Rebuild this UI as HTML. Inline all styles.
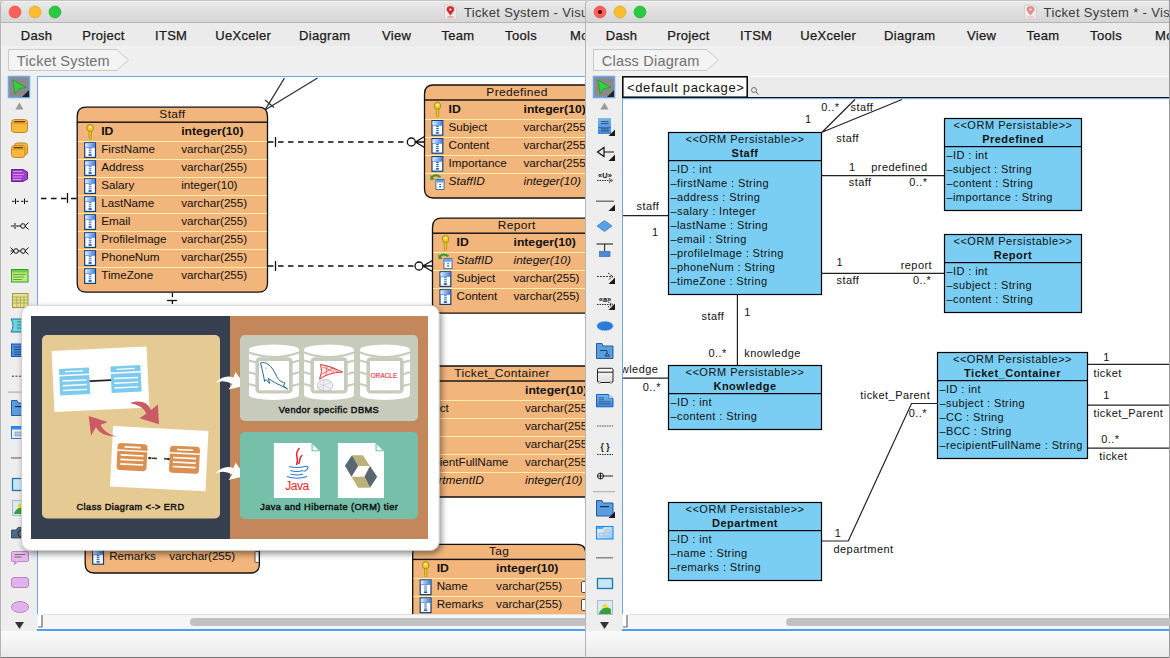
<!DOCTYPE html><html><head><meta charset="utf-8"><style>html,body{margin:0;padding:0;width:1170px;height:658px;overflow:hidden;background:#fff}svg{display:block}text{font-family:"Liberation Sans", sans-serif}</style></head><body>
<svg width="1170" height="658" viewBox="0 0 1170 658">
<defs>
<linearGradient id="gTitle" x1="0" y1="0" x2="0" y2="1"><stop offset="0" stop-color="#ebebeb"/><stop offset="1" stop-color="#d6d6d6"/></linearGradient>
<linearGradient id="gStatus" x1="0" y1="0" x2="0" y2="1"><stop offset="0" stop-color="#fbfbfb"/><stop offset="1" stop-color="#ebebeb"/></linearGradient>
<linearGradient id="gColTop" x1="0" y1="0" x2="1" y2="0"><stop offset="0" stop-color="#e0efff"/><stop offset="1" stop-color="#3a7ee0"/></linearGradient>
<linearGradient id="gBlueV" x1="0" y1="0" x2="0" y2="1"><stop offset="0" stop-color="#7ab8f0"/><stop offset="1" stop-color="#3a86d8"/></linearGradient>
<linearGradient id="gGrayV" x1="0" y1="0" x2="0" y2="1"><stop offset="0" stop-color="#ffffff"/><stop offset="1" stop-color="#dcdcdc"/></linearGradient>
<linearGradient id="gLightBlue" x1="0" y1="0" x2="1" y2="1"><stop offset="0" stop-color="#f4f8fc"/><stop offset="1" stop-color="#8ac4f0"/></linearGradient>
<clipPath id="clipL"><rect x="37" y="77" width="548" height="537"/></clipPath>
<clipPath id="clipR"><rect x="623" y="98" width="546" height="516"/></clipPath>
<filter id="shadow" x="-10%" y="-10%" width="130%" height="130%"><feGaussianBlur in="SourceAlpha" stdDeviation="3"/><feOffset dx="2" dy="3"/><feComponentTransfer><feFuncA type="linear" slope="0.45"/></feComponentTransfer><feMerge><feMergeNode/><feMergeNode in="SourceGraphic"/></feMerge></filter>
</defs>
<rect x="0" y="0" width="585" height="658" fill="#ececec"/>
<rect x="0" y="0" width="585" height="22" fill="url(#gTitle)"/>
<rect x="0" y="22" width="585" height="1" fill="#b5b5b5"/>
<circle cx="15" cy="12" r="6" fill="#fc5f57" stroke="#de4a43" stroke-width="0.6"/>
<circle cx="35" cy="12" r="6" fill="#fdbb2e" stroke="#dd9f21" stroke-width="0.6"/>
<circle cx="55" cy="12" r="6" fill="#29c940" stroke="#1daa2f" stroke-width="0.6"/>
<path d="M444.4 5 H453.4 L456.4 8 V19 H444.4 Z" fill="#eeeae6" stroke="#c9c2ba" stroke-width="0.6"/>
<path d="M450.4 15.5 L446.7 10.5 Q445.9 6.3 450.4 6 Q454.9 6.3 454.09999999999997 10.5 Z" fill="#d42a35"/>
<circle cx="450.4" cy="9.5" r="1.1" fill="#fff"/>
<rect x="447.4" y="16.5" width="6" height="1" fill="#d42a35" opacity="0.6"/>
<text x="463.9" y="16.7" font-size="13" fill="#3a3a3a" font-weight="normal" font-style="normal" text-anchor="start" letter-spacing="0.35" >Ticket System - Visual Paradigm</text>
<rect x="0" y="23" width="585" height="23" fill="#ebebeb"/>
<text x="20.7" y="39.7" font-size="13" fill="#1a1a1a" font-weight="normal" font-style="normal" text-anchor="start" letter-spacing="0.3" stroke="#1a1a1a" stroke-width="0.25">Dash</text>
<text x="82.2" y="39.7" font-size="13" fill="#1a1a1a" font-weight="normal" font-style="normal" text-anchor="start" letter-spacing="0.3" stroke="#1a1a1a" stroke-width="0.25">Project</text>
<text x="155" y="39.7" font-size="13" fill="#1a1a1a" font-weight="normal" font-style="normal" text-anchor="start" letter-spacing="0.3" stroke="#1a1a1a" stroke-width="0.25">ITSM</text>
<text x="215.2" y="39.7" font-size="13" fill="#1a1a1a" font-weight="normal" font-style="normal" text-anchor="start" letter-spacing="0.3" stroke="#1a1a1a" stroke-width="0.25">UeXceler</text>
<text x="299.1" y="39.7" font-size="13" fill="#1a1a1a" font-weight="normal" font-style="normal" text-anchor="start" letter-spacing="0.3" stroke="#1a1a1a" stroke-width="0.25">Diagram</text>
<text x="382" y="39.7" font-size="13" fill="#1a1a1a" font-weight="normal" font-style="normal" text-anchor="start" letter-spacing="0.3" stroke="#1a1a1a" stroke-width="0.25">View</text>
<text x="441.4" y="39.7" font-size="13" fill="#1a1a1a" font-weight="normal" font-style="normal" text-anchor="start" letter-spacing="0.3" stroke="#1a1a1a" stroke-width="0.25">Team</text>
<text x="505.1" y="39.7" font-size="13" fill="#1a1a1a" font-weight="normal" font-style="normal" text-anchor="start" letter-spacing="0.3" stroke="#1a1a1a" stroke-width="0.25">Tools</text>
<text x="570" y="39.7" font-size="13" fill="#1a1a1a" font-weight="normal" font-style="normal" text-anchor="start" letter-spacing="0.3" stroke="#1a1a1a" stroke-width="0.25">Modeling</text>
<rect x="0" y="46" width="585" height="30" fill="#f0f0f0"/>
<path d="M8.5 49.5 L116.5 49.5 L128.5 60 L116.5 70.5 L8.5 70.5 Z" fill="#f4f4f4" stroke="#c9c9c9" stroke-width="1"/>
<text x="16.8" y="65.9" font-size="14.5" fill="#707070" font-weight="normal" font-style="normal" text-anchor="start" letter-spacing="0.2" >Ticket System</text>
<rect x="0" y="76" width="37" height="555" fill="#eeeeee"/>
<rect x="37" y="76" width="548" height="538" fill="#ffffff"/>
<rect x="37" y="614" width="548" height="15" fill="#f6f6f6"/>
<rect x="37" y="614" width="548" height="1" fill="#e2e2e2"/>
<rect x="37" y="629" width="548" height="2" fill="#4c9ff2"/>
<rect x="0" y="631" width="585" height="26" fill="url(#gStatus)"/>
<rect x="0" y="656" width="585" height="1" fill="#e8e8e8"/>
<rect x="0" y="657" width="585" height="1" fill="#7a7a7a"/>
<rect x="0" y="0" width="1" height="658" fill="#b4b4b4"/>
<rect x="0" y="0" width="585" height="1" fill="#c4c4c4"/>
<rect x="0" y="1" width="585" height="1" fill="#f2f2f2"/>
<path d="M0 0 H6 Q1 1 0.5 6 V0 Z" fill="#c8c8c8"/>
<rect x="37" y="76" width="548" height="1" fill="#68a8ec"/>
<rect x="37" y="76" width="1" height="538" fill="#68a8ec"/>
<g clip-path="url(#clipL)">
<g stroke="#333" stroke-width="1.4" fill="none">
<path d="M265 110 L284.5 78"/><path d="M265 110 L317.5 78"/>
<path d="M265 100 L274 107.5" stroke-width="1.2"/>
</g>
<g stroke="#111" stroke-width="1.3" fill="none">
<path d="M268 142 L407 142" stroke-dasharray="5.5 4.5"/>
<path d="M275.5 137 L275.5 147"/>
<circle cx="411.3" cy="142" r="4"/>
<path d="M424.5 136.5 L415.5 142 L424.5 147.5 M415.5 142 L424.5 142"/>
<path d="M268 266 L415 266" stroke-dasharray="5.5 4.5"/>
<path d="M275.5 261 L275.5 271"/>
<circle cx="419" cy="266" r="4"/>
<path d="M432.5 260.5 L423 266 L432.5 271.5 M423 266 L432.5 266"/>
<path d="M41 198.5 L77 198.5" stroke-dasharray="5.5 4.5"/>
<path d="M67.5 193 L67.5 203"/>
<path d="M172.4 293 L172.4 306" stroke-dasharray="4 3"/>
<path d="M167 300.5 L177 300.5"/>
</g>
<path d="M77.2 116.2 Q77.2 107.2 86.2 107.2 L258.5 107.2 Q267.5 107.2 267.5 116.2 L267.5 283.2 Q267.5 292.2 258.5 292.2 L86.2 292.2 Q77.2 292.2 77.2 283.2 Z" fill="#f2b57b" stroke="#111" stroke-width="1.3"/>
<rect x="77.2" y="121.5" width="190.3" height="1.4" fill="#111"/>
<text transform="translate(172.35000000000002 118.2) scale(1.13 1)" x="0" y="0" font-size="10.6" fill="#111" font-weight="normal" font-style="normal" text-anchor="middle" letter-spacing="0.3" >Staff</text>
<g><ellipse cx="90.2" cy="128.0" rx="3.3" ry="3.6" fill="#f0cc20" stroke="#9a8010" stroke-width="0.8"/><ellipse cx="90.2" cy="127.10000000000001" rx="1.3" ry="0.9" fill="#fffbe0"/><path d="M89.0 131.2 L91.4 131.2 L91.4 138.2 L90.2 139.7 L89.0 138.2 Z" fill="#ecc81c" stroke="#9a8010" stroke-width="0.6"/></g>
<text transform="translate(101.2 135.2) scale(1.15 1)" x="0" y="0" font-size="10.6" fill="#111" font-weight="bold" font-style="normal" text-anchor="start" letter-spacing="0" >ID</text>
<text transform="translate(181.2 135.2) scale(1.15 1)" x="0" y="0" font-size="10.6" fill="#111" font-weight="bold" font-style="normal" text-anchor="start" letter-spacing="0" >integer(10)</text>
<rect x="77.9" y="141" width="188.9" height="1" fill="#fdf0a6"/>
<g><rect x="84.7" y="142.79999999999998" width="10.8" height="14.6" fill="#fff" stroke="#0f3f80" stroke-width="1.2"/><rect x="85.30000000000001" y="143.39999999999998" width="9.6" height="3.8" fill="url(#gColTop)"/><rect x="85.30000000000001" y="147.2" width="9.6" height="0.6" fill="#2a6ac8"/><ellipse cx="90.10000000000001" cy="148.79999999999998" rx="1.7" ry="0.55" fill="#1d5fb0"/><ellipse cx="90.10000000000001" cy="150.79999999999998" rx="1.7" ry="0.55" fill="#1d5fb0"/><ellipse cx="90.10000000000001" cy="152.79999999999998" rx="1.7" ry="0.55" fill="#1d5fb0"/><ellipse cx="90.10000000000001" cy="155.0" rx="1.9" ry="0.9" fill="#1d5fb0"/></g>
<text transform="translate(101.2 153.2) scale(1.1 1)" x="0" y="0" font-size="10.6" fill="#111" font-weight="normal" font-style="normal" text-anchor="start" letter-spacing="0" >FirstName</text>
<text transform="translate(181.2 153.2) scale(1.1 1)" x="0" y="0" font-size="10.6" fill="#111" font-weight="normal" font-style="normal" text-anchor="start" letter-spacing="0" >varchar(255)</text>
<rect x="77.9" y="159" width="188.9" height="1" fill="#fdf0a6"/>
<g><rect x="84.7" y="160.79999999999998" width="10.8" height="14.6" fill="#fff" stroke="#0f3f80" stroke-width="1.2"/><rect x="85.30000000000001" y="161.39999999999998" width="9.6" height="3.8" fill="url(#gColTop)"/><rect x="85.30000000000001" y="165.2" width="9.6" height="0.6" fill="#2a6ac8"/><ellipse cx="90.10000000000001" cy="166.79999999999998" rx="1.7" ry="0.55" fill="#1d5fb0"/><ellipse cx="90.10000000000001" cy="168.79999999999998" rx="1.7" ry="0.55" fill="#1d5fb0"/><ellipse cx="90.10000000000001" cy="170.79999999999998" rx="1.7" ry="0.55" fill="#1d5fb0"/><ellipse cx="90.10000000000001" cy="173.0" rx="1.9" ry="0.9" fill="#1d5fb0"/></g>
<text transform="translate(101.2 171.2) scale(1.1 1)" x="0" y="0" font-size="10.6" fill="#111" font-weight="normal" font-style="normal" text-anchor="start" letter-spacing="0" >Address</text>
<text transform="translate(181.2 171.2) scale(1.1 1)" x="0" y="0" font-size="10.6" fill="#111" font-weight="normal" font-style="normal" text-anchor="start" letter-spacing="0" >varchar(255)</text>
<rect x="77.9" y="177" width="188.9" height="1" fill="#fdf0a6"/>
<g><rect x="84.7" y="178.79999999999998" width="10.8" height="14.6" fill="#fff" stroke="#0f3f80" stroke-width="1.2"/><rect x="85.30000000000001" y="179.39999999999998" width="9.6" height="3.8" fill="url(#gColTop)"/><rect x="85.30000000000001" y="183.2" width="9.6" height="0.6" fill="#2a6ac8"/><ellipse cx="90.10000000000001" cy="184.79999999999998" rx="1.7" ry="0.55" fill="#1d5fb0"/><ellipse cx="90.10000000000001" cy="186.79999999999998" rx="1.7" ry="0.55" fill="#1d5fb0"/><ellipse cx="90.10000000000001" cy="188.79999999999998" rx="1.7" ry="0.55" fill="#1d5fb0"/><ellipse cx="90.10000000000001" cy="191.0" rx="1.9" ry="0.9" fill="#1d5fb0"/></g>
<text transform="translate(101.2 189.2) scale(1.1 1)" x="0" y="0" font-size="10.6" fill="#111" font-weight="normal" font-style="normal" text-anchor="start" letter-spacing="0" >Salary</text>
<text transform="translate(181.2 189.2) scale(1.1 1)" x="0" y="0" font-size="10.6" fill="#111" font-weight="normal" font-style="normal" text-anchor="start" letter-spacing="0" >integer(10)</text>
<rect x="77.9" y="195" width="188.9" height="1" fill="#fdf0a6"/>
<g><rect x="84.7" y="196.79999999999998" width="10.8" height="14.6" fill="#fff" stroke="#0f3f80" stroke-width="1.2"/><rect x="85.30000000000001" y="197.39999999999998" width="9.6" height="3.8" fill="url(#gColTop)"/><rect x="85.30000000000001" y="201.2" width="9.6" height="0.6" fill="#2a6ac8"/><ellipse cx="90.10000000000001" cy="202.79999999999998" rx="1.7" ry="0.55" fill="#1d5fb0"/><ellipse cx="90.10000000000001" cy="204.79999999999998" rx="1.7" ry="0.55" fill="#1d5fb0"/><ellipse cx="90.10000000000001" cy="206.79999999999998" rx="1.7" ry="0.55" fill="#1d5fb0"/><ellipse cx="90.10000000000001" cy="209.0" rx="1.9" ry="0.9" fill="#1d5fb0"/></g>
<text transform="translate(101.2 207.2) scale(1.1 1)" x="0" y="0" font-size="10.6" fill="#111" font-weight="normal" font-style="normal" text-anchor="start" letter-spacing="0" >LastName</text>
<text transform="translate(181.2 207.2) scale(1.1 1)" x="0" y="0" font-size="10.6" fill="#111" font-weight="normal" font-style="normal" text-anchor="start" letter-spacing="0" >varchar(255)</text>
<rect x="77.9" y="213" width="188.9" height="1" fill="#fdf0a6"/>
<g><rect x="84.7" y="214.79999999999998" width="10.8" height="14.6" fill="#fff" stroke="#0f3f80" stroke-width="1.2"/><rect x="85.30000000000001" y="215.39999999999998" width="9.6" height="3.8" fill="url(#gColTop)"/><rect x="85.30000000000001" y="219.2" width="9.6" height="0.6" fill="#2a6ac8"/><ellipse cx="90.10000000000001" cy="220.79999999999998" rx="1.7" ry="0.55" fill="#1d5fb0"/><ellipse cx="90.10000000000001" cy="222.79999999999998" rx="1.7" ry="0.55" fill="#1d5fb0"/><ellipse cx="90.10000000000001" cy="224.79999999999998" rx="1.7" ry="0.55" fill="#1d5fb0"/><ellipse cx="90.10000000000001" cy="227.0" rx="1.9" ry="0.9" fill="#1d5fb0"/></g>
<text transform="translate(101.2 225.2) scale(1.1 1)" x="0" y="0" font-size="10.6" fill="#111" font-weight="normal" font-style="normal" text-anchor="start" letter-spacing="0" >Email</text>
<text transform="translate(181.2 225.2) scale(1.1 1)" x="0" y="0" font-size="10.6" fill="#111" font-weight="normal" font-style="normal" text-anchor="start" letter-spacing="0" >varchar(255)</text>
<rect x="77.9" y="231" width="188.9" height="1" fill="#fdf0a6"/>
<g><rect x="84.7" y="232.79999999999998" width="10.8" height="14.6" fill="#fff" stroke="#0f3f80" stroke-width="1.2"/><rect x="85.30000000000001" y="233.39999999999998" width="9.6" height="3.8" fill="url(#gColTop)"/><rect x="85.30000000000001" y="237.2" width="9.6" height="0.6" fill="#2a6ac8"/><ellipse cx="90.10000000000001" cy="238.79999999999998" rx="1.7" ry="0.55" fill="#1d5fb0"/><ellipse cx="90.10000000000001" cy="240.79999999999998" rx="1.7" ry="0.55" fill="#1d5fb0"/><ellipse cx="90.10000000000001" cy="242.79999999999998" rx="1.7" ry="0.55" fill="#1d5fb0"/><ellipse cx="90.10000000000001" cy="245.0" rx="1.9" ry="0.9" fill="#1d5fb0"/></g>
<text transform="translate(101.2 243.2) scale(1.1 1)" x="0" y="0" font-size="10.6" fill="#111" font-weight="normal" font-style="normal" text-anchor="start" letter-spacing="0" >ProfileImage</text>
<text transform="translate(181.2 243.2) scale(1.1 1)" x="0" y="0" font-size="10.6" fill="#111" font-weight="normal" font-style="normal" text-anchor="start" letter-spacing="0" >varchar(255)</text>
<rect x="77.9" y="249" width="188.9" height="1" fill="#fdf0a6"/>
<g><rect x="84.7" y="250.79999999999998" width="10.8" height="14.6" fill="#fff" stroke="#0f3f80" stroke-width="1.2"/><rect x="85.30000000000001" y="251.39999999999998" width="9.6" height="3.8" fill="url(#gColTop)"/><rect x="85.30000000000001" y="255.2" width="9.6" height="0.6" fill="#2a6ac8"/><ellipse cx="90.10000000000001" cy="256.8" rx="1.7" ry="0.55" fill="#1d5fb0"/><ellipse cx="90.10000000000001" cy="258.8" rx="1.7" ry="0.55" fill="#1d5fb0"/><ellipse cx="90.10000000000001" cy="260.8" rx="1.7" ry="0.55" fill="#1d5fb0"/><ellipse cx="90.10000000000001" cy="263.0" rx="1.9" ry="0.9" fill="#1d5fb0"/></g>
<text transform="translate(101.2 261.2) scale(1.1 1)" x="0" y="0" font-size="10.6" fill="#111" font-weight="normal" font-style="normal" text-anchor="start" letter-spacing="0" >PhoneNum</text>
<text transform="translate(181.2 261.2) scale(1.1 1)" x="0" y="0" font-size="10.6" fill="#111" font-weight="normal" font-style="normal" text-anchor="start" letter-spacing="0" >varchar(255)</text>
<rect x="77.9" y="267" width="188.9" height="1" fill="#fdf0a6"/>
<g><rect x="84.7" y="268.8" width="10.8" height="14.6" fill="#fff" stroke="#0f3f80" stroke-width="1.2"/><rect x="85.30000000000001" y="269.4" width="9.6" height="3.8" fill="url(#gColTop)"/><rect x="85.30000000000001" y="273.2" width="9.6" height="0.6" fill="#2a6ac8"/><ellipse cx="90.10000000000001" cy="274.8" rx="1.7" ry="0.55" fill="#1d5fb0"/><ellipse cx="90.10000000000001" cy="276.8" rx="1.7" ry="0.55" fill="#1d5fb0"/><ellipse cx="90.10000000000001" cy="278.8" rx="1.7" ry="0.55" fill="#1d5fb0"/><ellipse cx="90.10000000000001" cy="281.0" rx="1.9" ry="0.9" fill="#1d5fb0"/></g>
<text transform="translate(101.2 279.2) scale(1.1 1)" x="0" y="0" font-size="10.6" fill="#111" font-weight="normal" font-style="normal" text-anchor="start" letter-spacing="0" >TimeZone</text>
<text transform="translate(181.2 279.2) scale(1.1 1)" x="0" y="0" font-size="10.6" fill="#111" font-weight="normal" font-style="normal" text-anchor="start" letter-spacing="0" >varchar(255)</text>
<path d="M424.5 94 Q424.5 85 433.5 85 L600.5 85 Q609.5 85 609.5 94 L609.5 189 Q609.5 198 600.5 198 L433.5 198 Q424.5 198 424.5 189 Z" fill="#f2b57b" stroke="#111" stroke-width="1.3"/>
<rect x="424.5" y="99.3" width="185" height="1.4" fill="#111"/>
<text transform="translate(517.0 96) scale(1.13 1)" x="0" y="0" font-size="10.6" fill="#111" font-weight="normal" font-style="normal" text-anchor="middle" letter-spacing="0.3" >Predefined</text>
<g><ellipse cx="437.5" cy="105.8" rx="3.3" ry="3.6" fill="#f0cc20" stroke="#9a8010" stroke-width="0.8"/><ellipse cx="437.5" cy="104.9" rx="1.3" ry="0.9" fill="#fffbe0"/><path d="M436.3 109 L438.7 109 L438.7 116 L437.5 117.5 L436.3 116 Z" fill="#ecc81c" stroke="#9a8010" stroke-width="0.6"/></g>
<text transform="translate(448.5 113) scale(1.15 1)" x="0" y="0" font-size="10.6" fill="#111" font-weight="bold" font-style="normal" text-anchor="start" letter-spacing="0" >ID</text>
<text transform="translate(523.5 113) scale(1.15 1)" x="0" y="0" font-size="10.6" fill="#111" font-weight="bold" font-style="normal" text-anchor="start" letter-spacing="0" >integer(10)</text>
<rect x="425.2" y="119" width="183.6" height="1" fill="#fdf0a6"/>
<g><rect x="432.0" y="120.6" width="10.8" height="14.6" fill="#fff" stroke="#0f3f80" stroke-width="1.2"/><rect x="432.59999999999997" y="121.2" width="9.6" height="3.8" fill="url(#gColTop)"/><rect x="432.59999999999997" y="125" width="9.6" height="0.6" fill="#2a6ac8"/><ellipse cx="437.4" cy="126.6" rx="1.7" ry="0.55" fill="#1d5fb0"/><ellipse cx="437.4" cy="128.6" rx="1.7" ry="0.55" fill="#1d5fb0"/><ellipse cx="437.4" cy="130.6" rx="1.7" ry="0.55" fill="#1d5fb0"/><ellipse cx="437.4" cy="132.8" rx="1.9" ry="0.9" fill="#1d5fb0"/></g>
<text transform="translate(448.5 131) scale(1.1 1)" x="0" y="0" font-size="10.6" fill="#111" font-weight="normal" font-style="normal" text-anchor="start" letter-spacing="0" >Subject</text>
<text transform="translate(523.5 131) scale(1.1 1)" x="0" y="0" font-size="10.6" fill="#111" font-weight="normal" font-style="normal" text-anchor="start" letter-spacing="0" >varchar(255)</text>
<rect x="425.2" y="137" width="183.6" height="1" fill="#fdf0a6"/>
<g><rect x="432.0" y="138.6" width="10.8" height="14.6" fill="#fff" stroke="#0f3f80" stroke-width="1.2"/><rect x="432.59999999999997" y="139.2" width="9.6" height="3.8" fill="url(#gColTop)"/><rect x="432.59999999999997" y="143" width="9.6" height="0.6" fill="#2a6ac8"/><ellipse cx="437.4" cy="144.6" rx="1.7" ry="0.55" fill="#1d5fb0"/><ellipse cx="437.4" cy="146.6" rx="1.7" ry="0.55" fill="#1d5fb0"/><ellipse cx="437.4" cy="148.6" rx="1.7" ry="0.55" fill="#1d5fb0"/><ellipse cx="437.4" cy="150.8" rx="1.9" ry="0.9" fill="#1d5fb0"/></g>
<text transform="translate(448.5 149) scale(1.1 1)" x="0" y="0" font-size="10.6" fill="#111" font-weight="normal" font-style="normal" text-anchor="start" letter-spacing="0" >Content</text>
<text transform="translate(523.5 149) scale(1.1 1)" x="0" y="0" font-size="10.6" fill="#111" font-weight="normal" font-style="normal" text-anchor="start" letter-spacing="0" >varchar(255)</text>
<rect x="425.2" y="155" width="183.6" height="1" fill="#fdf0a6"/>
<g><rect x="432.0" y="156.6" width="10.8" height="14.6" fill="#fff" stroke="#0f3f80" stroke-width="1.2"/><rect x="432.59999999999997" y="157.2" width="9.6" height="3.8" fill="url(#gColTop)"/><rect x="432.59999999999997" y="161" width="9.6" height="0.6" fill="#2a6ac8"/><ellipse cx="437.4" cy="162.6" rx="1.7" ry="0.55" fill="#1d5fb0"/><ellipse cx="437.4" cy="164.6" rx="1.7" ry="0.55" fill="#1d5fb0"/><ellipse cx="437.4" cy="166.6" rx="1.7" ry="0.55" fill="#1d5fb0"/><ellipse cx="437.4" cy="168.8" rx="1.9" ry="0.9" fill="#1d5fb0"/></g>
<text transform="translate(448.5 167) scale(1.1 1)" x="0" y="0" font-size="10.6" fill="#111" font-weight="normal" font-style="normal" text-anchor="start" letter-spacing="0" >Importance</text>
<text transform="translate(523.5 167) scale(1.1 1)" x="0" y="0" font-size="10.6" fill="#111" font-weight="normal" font-style="normal" text-anchor="start" letter-spacing="0" >varchar(255)</text>
<rect x="425.2" y="173" width="183.6" height="1" fill="#fdf0a6"/>
<g><path d="M431.5 178 Q434.5 173 440.5 177" fill="none" stroke="#2f9a3a" stroke-width="2"/><path d="M430.5 175 L434.5 179.5 L430.5 180 Z" fill="#2f9a3a"/>
<rect x="436.0" y="179.5" width="8" height="10" fill="#fff" stroke="#1b56a6" stroke-width="0.8"/><rect x="436.5" y="180" width="7" height="2.5" fill="#5aa0e8"/><rect x="439.2" y="184" width="1.8" height="0.9" fill="#1d5fb0"/><rect x="439.2" y="186" width="1.8" height="1.4" fill="#1d5fb0"/></g>
<text transform="translate(448.5 185) scale(1.12 1)" x="0" y="0" font-size="10.6" fill="#111" font-weight="normal" font-style="italic" text-anchor="start" letter-spacing="0" >StaffID</text>
<text transform="translate(523.5 185) scale(1.12 1)" x="0" y="0" font-size="10.6" fill="#111" font-weight="normal" font-style="italic" text-anchor="start" letter-spacing="0" >integer(10)</text>
<path d="M432.5 227.2 Q432.5 218.2 441.5 218.2 L591.9 218.2 Q600.9 218.2 600.9 227.2 L600.9 304.2 Q600.9 313.2 591.9 313.2 L441.5 313.2 Q432.5 313.2 432.5 304.2 Z" fill="#f2b57b" stroke="#111" stroke-width="1.3"/>
<rect x="432.5" y="232.5" width="168.4" height="1.4" fill="#111"/>
<text transform="translate(516.7 229.2) scale(1.13 1)" x="0" y="0" font-size="10.6" fill="#111" font-weight="normal" font-style="normal" text-anchor="middle" letter-spacing="0.3" >Report</text>
<g><ellipse cx="445.5" cy="239.0" rx="3.3" ry="3.6" fill="#f0cc20" stroke="#9a8010" stroke-width="0.8"/><ellipse cx="445.5" cy="238.1" rx="1.3" ry="0.9" fill="#fffbe0"/><path d="M444.3 242.2 L446.7 242.2 L446.7 249.2 L445.5 250.7 L444.3 249.2 Z" fill="#ecc81c" stroke="#9a8010" stroke-width="0.6"/></g>
<text transform="translate(456.5 246.2) scale(1.15 1)" x="0" y="0" font-size="10.6" fill="#111" font-weight="bold" font-style="normal" text-anchor="start" letter-spacing="0" >ID</text>
<text transform="translate(513.5 246.2) scale(1.15 1)" x="0" y="0" font-size="10.6" fill="#111" font-weight="bold" font-style="normal" text-anchor="start" letter-spacing="0" >integer(10)</text>
<rect x="433.2" y="252" width="167.0" height="1" fill="#fdf0a6"/>
<g><path d="M439.5 257.2 Q442.5 252.2 448.5 256.2" fill="none" stroke="#2f9a3a" stroke-width="2"/><path d="M438.5 254.2 L442.5 258.7 L438.5 259.2 Z" fill="#2f9a3a"/>
<rect x="444.0" y="258.7" width="8" height="10" fill="#fff" stroke="#1b56a6" stroke-width="0.8"/><rect x="444.5" y="259.2" width="7" height="2.5" fill="#5aa0e8"/><rect x="447.2" y="263.2" width="1.8" height="0.9" fill="#1d5fb0"/><rect x="447.2" y="265.2" width="1.8" height="1.4" fill="#1d5fb0"/></g>
<text transform="translate(456.5 264.2) scale(1.12 1)" x="0" y="0" font-size="10.6" fill="#111" font-weight="normal" font-style="italic" text-anchor="start" letter-spacing="0" >StaffID</text>
<text transform="translate(513.5 264.2) scale(1.12 1)" x="0" y="0" font-size="10.6" fill="#111" font-weight="normal" font-style="italic" text-anchor="start" letter-spacing="0" >integer(10)</text>
<rect x="433.2" y="270" width="167.0" height="1" fill="#fdf0a6"/>
<g><rect x="440.0" y="271.8" width="10.8" height="14.6" fill="#fff" stroke="#0f3f80" stroke-width="1.2"/><rect x="440.59999999999997" y="272.4" width="9.6" height="3.8" fill="url(#gColTop)"/><rect x="440.59999999999997" y="276.2" width="9.6" height="0.6" fill="#2a6ac8"/><ellipse cx="445.4" cy="277.8" rx="1.7" ry="0.55" fill="#1d5fb0"/><ellipse cx="445.4" cy="279.8" rx="1.7" ry="0.55" fill="#1d5fb0"/><ellipse cx="445.4" cy="281.8" rx="1.7" ry="0.55" fill="#1d5fb0"/><ellipse cx="445.4" cy="284.0" rx="1.9" ry="0.9" fill="#1d5fb0"/></g>
<text transform="translate(456.5 282.2) scale(1.1 1)" x="0" y="0" font-size="10.6" fill="#111" font-weight="normal" font-style="normal" text-anchor="start" letter-spacing="0" >Subject</text>
<text transform="translate(513.5 282.2) scale(1.1 1)" x="0" y="0" font-size="10.6" fill="#111" font-weight="normal" font-style="normal" text-anchor="start" letter-spacing="0" >varchar(255)</text>
<rect x="433.2" y="288" width="167.0" height="1" fill="#fdf0a6"/>
<g><rect x="440.0" y="289.8" width="10.8" height="14.6" fill="#fff" stroke="#0f3f80" stroke-width="1.2"/><rect x="440.59999999999997" y="290.4" width="9.6" height="3.8" fill="url(#gColTop)"/><rect x="440.59999999999997" y="294.2" width="9.6" height="0.6" fill="#2a6ac8"/><ellipse cx="445.4" cy="295.8" rx="1.7" ry="0.55" fill="#1d5fb0"/><ellipse cx="445.4" cy="297.8" rx="1.7" ry="0.55" fill="#1d5fb0"/><ellipse cx="445.4" cy="299.8" rx="1.7" ry="0.55" fill="#1d5fb0"/><ellipse cx="445.4" cy="302.0" rx="1.9" ry="0.9" fill="#1d5fb0"/></g>
<text transform="translate(456.5 300.2) scale(1.1 1)" x="0" y="0" font-size="10.6" fill="#111" font-weight="normal" font-style="normal" text-anchor="start" letter-spacing="0" >Content</text>
<text transform="translate(513.5 300.2) scale(1.1 1)" x="0" y="0" font-size="10.6" fill="#111" font-weight="normal" font-style="normal" text-anchor="start" letter-spacing="0" >varchar(255)</text>
<path d="M386 375 Q386 366 395 366 L609 366 Q618 366 618 375 L618 488 Q618 497 609 497 L395 497 Q386 497 386 488 Z" fill="#f2b57b" stroke="#111" stroke-width="1.3"/>
<rect x="386" y="380.3" width="232" height="1.4" fill="#111"/>
<text transform="translate(502.0 377) scale(1.13 1)" x="0" y="0" font-size="10.6" fill="#111" font-weight="normal" font-style="normal" text-anchor="middle" letter-spacing="0.3" >Ticket_Container</text>
<g><ellipse cx="399" cy="386.8" rx="3.3" ry="3.6" fill="#f0cc20" stroke="#9a8010" stroke-width="0.8"/><ellipse cx="399" cy="385.9" rx="1.3" ry="0.9" fill="#fffbe0"/><path d="M397.8 390 L400.2 390 L400.2 397 L399 398.5 L397.8 397 Z" fill="#ecc81c" stroke="#9a8010" stroke-width="0.6"/></g>
<text transform="translate(410 394) scale(1.15 1)" x="0" y="0" font-size="10.6" fill="#111" font-weight="bold" font-style="normal" text-anchor="start" letter-spacing="0" >ID</text>
<text transform="translate(525 394) scale(1.15 1)" x="0" y="0" font-size="10.6" fill="#111" font-weight="bold" font-style="normal" text-anchor="start" letter-spacing="0" >integer(10)</text>
<rect x="386.7" y="400" width="230.6" height="1" fill="#fdf0a6"/>
<g><rect x="393.5" y="401.6" width="10.8" height="14.6" fill="#fff" stroke="#0f3f80" stroke-width="1.2"/><rect x="394.09999999999997" y="402.2" width="9.6" height="3.8" fill="url(#gColTop)"/><rect x="394.09999999999997" y="406" width="9.6" height="0.6" fill="#2a6ac8"/><ellipse cx="398.9" cy="407.6" rx="1.7" ry="0.55" fill="#1d5fb0"/><ellipse cx="398.9" cy="409.6" rx="1.7" ry="0.55" fill="#1d5fb0"/><ellipse cx="398.9" cy="411.6" rx="1.7" ry="0.55" fill="#1d5fb0"/><ellipse cx="398.9" cy="413.8" rx="1.9" ry="0.9" fill="#1d5fb0"/></g>
<text transform="translate(410 412) scale(1.1 1)" x="0" y="0" font-size="10.6" fill="#111" font-weight="normal" font-style="normal" text-anchor="start" letter-spacing="0" >Subject</text>
<text transform="translate(525 412) scale(1.1 1)" x="0" y="0" font-size="10.6" fill="#111" font-weight="normal" font-style="normal" text-anchor="start" letter-spacing="0" >varchar(255)</text>
<rect x="386.7" y="418" width="230.6" height="1" fill="#fdf0a6"/>
<g><rect x="393.5" y="419.6" width="10.8" height="14.6" fill="#fff" stroke="#0f3f80" stroke-width="1.2"/><rect x="394.09999999999997" y="420.2" width="9.6" height="3.8" fill="url(#gColTop)"/><rect x="394.09999999999997" y="424" width="9.6" height="0.6" fill="#2a6ac8"/><ellipse cx="398.9" cy="425.6" rx="1.7" ry="0.55" fill="#1d5fb0"/><ellipse cx="398.9" cy="427.6" rx="1.7" ry="0.55" fill="#1d5fb0"/><ellipse cx="398.9" cy="429.6" rx="1.7" ry="0.55" fill="#1d5fb0"/><ellipse cx="398.9" cy="431.8" rx="1.9" ry="0.9" fill="#1d5fb0"/></g>
<text transform="translate(410 430) scale(1.1 1)" x="0" y="0" font-size="10.6" fill="#111" font-weight="normal" font-style="normal" text-anchor="start" letter-spacing="0" >CC</text>
<text transform="translate(525 430) scale(1.1 1)" x="0" y="0" font-size="10.6" fill="#111" font-weight="normal" font-style="normal" text-anchor="start" letter-spacing="0" >varchar(255)</text>
<rect x="386.7" y="436" width="230.6" height="1" fill="#fdf0a6"/>
<g><rect x="393.5" y="437.6" width="10.8" height="14.6" fill="#fff" stroke="#0f3f80" stroke-width="1.2"/><rect x="394.09999999999997" y="438.2" width="9.6" height="3.8" fill="url(#gColTop)"/><rect x="394.09999999999997" y="442" width="9.6" height="0.6" fill="#2a6ac8"/><ellipse cx="398.9" cy="443.6" rx="1.7" ry="0.55" fill="#1d5fb0"/><ellipse cx="398.9" cy="445.6" rx="1.7" ry="0.55" fill="#1d5fb0"/><ellipse cx="398.9" cy="447.6" rx="1.7" ry="0.55" fill="#1d5fb0"/><ellipse cx="398.9" cy="449.8" rx="1.9" ry="0.9" fill="#1d5fb0"/></g>
<text transform="translate(410 448) scale(1.1 1)" x="0" y="0" font-size="10.6" fill="#111" font-weight="normal" font-style="normal" text-anchor="start" letter-spacing="0" >BCC</text>
<text transform="translate(525 448) scale(1.1 1)" x="0" y="0" font-size="10.6" fill="#111" font-weight="normal" font-style="normal" text-anchor="start" letter-spacing="0" >varchar(255)</text>
<rect x="386.7" y="454" width="230.6" height="1" fill="#fdf0a6"/>
<g><rect x="393.5" y="455.6" width="10.8" height="14.6" fill="#fff" stroke="#0f3f80" stroke-width="1.2"/><rect x="394.09999999999997" y="456.2" width="9.6" height="3.8" fill="url(#gColTop)"/><rect x="394.09999999999997" y="460" width="9.6" height="0.6" fill="#2a6ac8"/><ellipse cx="398.9" cy="461.6" rx="1.7" ry="0.55" fill="#1d5fb0"/><ellipse cx="398.9" cy="463.6" rx="1.7" ry="0.55" fill="#1d5fb0"/><ellipse cx="398.9" cy="465.6" rx="1.7" ry="0.55" fill="#1d5fb0"/><ellipse cx="398.9" cy="467.8" rx="1.9" ry="0.9" fill="#1d5fb0"/></g>
<text transform="translate(410 466) scale(1.1 1)" x="0" y="0" font-size="10.6" fill="#111" font-weight="normal" font-style="normal" text-anchor="start" letter-spacing="0" >RecipientFullName</text>
<text transform="translate(525 466) scale(1.1 1)" x="0" y="0" font-size="10.6" fill="#111" font-weight="normal" font-style="normal" text-anchor="start" letter-spacing="0" >varchar(255)</text>
<rect x="386.7" y="472" width="230.6" height="1" fill="#fdf0a6"/>
<g><path d="M393 477 Q396 472 402 476" fill="none" stroke="#2f9a3a" stroke-width="2"/><path d="M392 474 L396 478.5 L392 479 Z" fill="#2f9a3a"/>
<rect x="397.5" y="478.5" width="8" height="10" fill="#fff" stroke="#1b56a6" stroke-width="0.8"/><rect x="398" y="479" width="7" height="2.5" fill="#5aa0e8"/><rect x="400.7" y="483" width="1.8" height="0.9" fill="#1d5fb0"/><rect x="400.7" y="485" width="1.8" height="1.4" fill="#1d5fb0"/></g>
<text transform="translate(410 484) scale(1.12 1)" x="0" y="0" font-size="10.6" fill="#111" font-weight="normal" font-style="italic" text-anchor="start" letter-spacing="0" >DepartmentID</text>
<text transform="translate(525 484) scale(1.12 1)" x="0" y="0" font-size="10.6" fill="#111" font-weight="normal" font-style="italic" text-anchor="start" letter-spacing="0" >integer(10)</text>
<path d="M85.2 433 Q85.2 424 94.2 424 L250.39999999999998 424 Q259.4 424 259.4 433 L259.4 564 Q259.4 573 250.39999999999998 573 L94.2 573 Q85.2 573 85.2 564 Z" fill="#f2b57b" stroke="#111" stroke-width="1.3"/>
<rect x="85.2" y="438.3" width="174.2" height="1.4" fill="#111"/>
<text transform="translate(172.3 435) scale(1.13 1)" x="0" y="0" font-size="10.6" fill="#111" font-weight="normal" font-style="normal" text-anchor="middle" letter-spacing="0.3" >Department</text>
<g><ellipse cx="98.2" cy="444.8" rx="3.3" ry="3.6" fill="#f0cc20" stroke="#9a8010" stroke-width="0.8"/><ellipse cx="98.2" cy="443.9" rx="1.3" ry="0.9" fill="#fffbe0"/><path d="M97.0 448 L99.4 448 L99.4 455 L98.2 456.5 L97.0 455 Z" fill="#ecc81c" stroke="#9a8010" stroke-width="0.6"/></g>
<text transform="translate(109.2 452) scale(1.15 1)" x="0" y="0" font-size="10.6" fill="#111" font-weight="bold" font-style="normal" text-anchor="start" letter-spacing="0" >ID</text>
<text transform="translate(169.2 452) scale(1.15 1)" x="0" y="0" font-size="10.6" fill="#111" font-weight="bold" font-style="normal" text-anchor="start" letter-spacing="0" >integer(10)</text>
<rect x="85.9" y="458" width="172.79999999999998" height="1" fill="#fdf0a6"/>
<g><rect x="92.7" y="459.6" width="10.8" height="14.6" fill="#fff" stroke="#0f3f80" stroke-width="1.2"/><rect x="93.30000000000001" y="460.2" width="9.6" height="3.8" fill="url(#gColTop)"/><rect x="93.30000000000001" y="464" width="9.6" height="0.6" fill="#2a6ac8"/><ellipse cx="98.10000000000001" cy="465.6" rx="1.7" ry="0.55" fill="#1d5fb0"/><ellipse cx="98.10000000000001" cy="467.6" rx="1.7" ry="0.55" fill="#1d5fb0"/><ellipse cx="98.10000000000001" cy="469.6" rx="1.7" ry="0.55" fill="#1d5fb0"/><ellipse cx="98.10000000000001" cy="471.8" rx="1.9" ry="0.9" fill="#1d5fb0"/></g>
<text transform="translate(109.2 470) scale(1.1 1)" x="0" y="0" font-size="10.6" fill="#111" font-weight="normal" font-style="normal" text-anchor="start" letter-spacing="0" >Name</text>
<text transform="translate(169.2 470) scale(1.1 1)" x="0" y="0" font-size="10.6" fill="#111" font-weight="normal" font-style="normal" text-anchor="start" letter-spacing="0" >varchar(255)</text>
<rect x="85.9" y="476" width="172.79999999999998" height="1" fill="#fdf0a6"/>
<g><rect x="92.7" y="477.6" width="10.8" height="14.6" fill="#fff" stroke="#0f3f80" stroke-width="1.2"/><rect x="93.30000000000001" y="478.2" width="9.6" height="3.8" fill="url(#gColTop)"/><rect x="93.30000000000001" y="482" width="9.6" height="0.6" fill="#2a6ac8"/><ellipse cx="98.10000000000001" cy="483.6" rx="1.7" ry="0.55" fill="#1d5fb0"/><ellipse cx="98.10000000000001" cy="485.6" rx="1.7" ry="0.55" fill="#1d5fb0"/><ellipse cx="98.10000000000001" cy="487.6" rx="1.7" ry="0.55" fill="#1d5fb0"/><ellipse cx="98.10000000000001" cy="489.8" rx="1.9" ry="0.9" fill="#1d5fb0"/></g>
<text transform="translate(109.2 488) scale(1.1 1)" x="0" y="0" font-size="10.6" fill="#111" font-weight="normal" font-style="normal" text-anchor="start" letter-spacing="0" >Remarks</text>
<text transform="translate(169.2 488) scale(1.1 1)" x="0" y="0" font-size="10.6" fill="#111" font-weight="normal" font-style="normal" text-anchor="start" letter-spacing="0" >varchar(255)</text>
<rect x="85.9" y="494" width="172.79999999999998" height="1" fill="#fdf0a6"/>
<g><rect x="92.7" y="495.6" width="10.8" height="14.6" fill="#fff" stroke="#0f3f80" stroke-width="1.2"/><rect x="93.30000000000001" y="496.2" width="9.6" height="3.8" fill="url(#gColTop)"/><rect x="93.30000000000001" y="500" width="9.6" height="0.6" fill="#2a6ac8"/><ellipse cx="98.10000000000001" cy="501.6" rx="1.7" ry="0.55" fill="#1d5fb0"/><ellipse cx="98.10000000000001" cy="503.6" rx="1.7" ry="0.55" fill="#1d5fb0"/><ellipse cx="98.10000000000001" cy="505.6" rx="1.7" ry="0.55" fill="#1d5fb0"/><ellipse cx="98.10000000000001" cy="507.8" rx="1.9" ry="0.9" fill="#1d5fb0"/></g>
<text transform="translate(109.2 506) scale(1.1 1)" x="0" y="0" font-size="10.6" fill="#111" font-weight="normal" font-style="normal" text-anchor="start" letter-spacing="0" >X</text>
<text transform="translate(169.2 506) scale(1.1 1)" x="0" y="0" font-size="10.6" fill="#111" font-weight="normal" font-style="normal" text-anchor="start" letter-spacing="0" >varchar(255)</text>
<rect x="85.9" y="512" width="172.79999999999998" height="1" fill="#fdf0a6"/>
<g><rect x="92.7" y="513.6" width="10.8" height="14.6" fill="#fff" stroke="#0f3f80" stroke-width="1.2"/><rect x="93.30000000000001" y="514.2" width="9.6" height="3.8" fill="url(#gColTop)"/><rect x="93.30000000000001" y="518" width="9.6" height="0.6" fill="#2a6ac8"/><ellipse cx="98.10000000000001" cy="519.6" rx="1.7" ry="0.55" fill="#1d5fb0"/><ellipse cx="98.10000000000001" cy="521.6" rx="1.7" ry="0.55" fill="#1d5fb0"/><ellipse cx="98.10000000000001" cy="523.6" rx="1.7" ry="0.55" fill="#1d5fb0"/><ellipse cx="98.10000000000001" cy="525.8" rx="1.9" ry="0.9" fill="#1d5fb0"/></g>
<text transform="translate(109.2 524) scale(1.1 1)" x="0" y="0" font-size="10.6" fill="#111" font-weight="normal" font-style="normal" text-anchor="start" letter-spacing="0" >X</text>
<text transform="translate(169.2 524) scale(1.1 1)" x="0" y="0" font-size="10.6" fill="#111" font-weight="normal" font-style="normal" text-anchor="start" letter-spacing="0" >varchar(255)</text>
<rect x="85.9" y="530" width="172.79999999999998" height="1" fill="#fdf0a6"/>
<g><rect x="92.7" y="531.6" width="10.8" height="14.6" fill="#fff" stroke="#0f3f80" stroke-width="1.2"/><rect x="93.30000000000001" y="532.2" width="9.6" height="3.8" fill="url(#gColTop)"/><rect x="93.30000000000001" y="536" width="9.6" height="0.6" fill="#2a6ac8"/><ellipse cx="98.10000000000001" cy="537.6" rx="1.7" ry="0.55" fill="#1d5fb0"/><ellipse cx="98.10000000000001" cy="539.6" rx="1.7" ry="0.55" fill="#1d5fb0"/><ellipse cx="98.10000000000001" cy="541.6" rx="1.7" ry="0.55" fill="#1d5fb0"/><ellipse cx="98.10000000000001" cy="543.8" rx="1.9" ry="0.9" fill="#1d5fb0"/></g>
<text transform="translate(109.2 542) scale(1.1 1)" x="0" y="0" font-size="10.6" fill="#111" font-weight="normal" font-style="normal" text-anchor="start" letter-spacing="0" >X</text>
<text transform="translate(169.2 542) scale(1.1 1)" x="0" y="0" font-size="10.6" fill="#111" font-weight="normal" font-style="normal" text-anchor="start" letter-spacing="0" >varchar(255)</text>
<rect x="85.9" y="548" width="172.79999999999998" height="1" fill="#fdf0a6"/>
<g><rect x="92.7" y="549.6" width="10.8" height="14.6" fill="#fff" stroke="#0f3f80" stroke-width="1.2"/><rect x="93.30000000000001" y="550.2" width="9.6" height="3.8" fill="url(#gColTop)"/><rect x="93.30000000000001" y="554" width="9.6" height="0.6" fill="#2a6ac8"/><ellipse cx="98.10000000000001" cy="555.6" rx="1.7" ry="0.55" fill="#1d5fb0"/><ellipse cx="98.10000000000001" cy="557.6" rx="1.7" ry="0.55" fill="#1d5fb0"/><ellipse cx="98.10000000000001" cy="559.6" rx="1.7" ry="0.55" fill="#1d5fb0"/><ellipse cx="98.10000000000001" cy="561.8" rx="1.9" ry="0.9" fill="#1d5fb0"/></g>
<text transform="translate(109.2 560) scale(1.1 1)" x="0" y="0" font-size="10.6" fill="#111" font-weight="normal" font-style="normal" text-anchor="start" letter-spacing="0" >Remarks</text>
<text transform="translate(169.2 560) scale(1.1 1)" x="0" y="0" font-size="10.6" fill="#111" font-weight="normal" font-style="normal" text-anchor="start" letter-spacing="0" >varchar(255)</text>
<rect x="255" y="551.5" width="4" height="11" rx="1" fill="#fff" stroke="#333" stroke-width="0.8"/>
<path d="M412.7 553.4 Q412.7 544.4 421.7 544.4 L576.7 544.4 Q585.7 544.4 585.7 553.4 L585.7 630.4 Q585.7 639.4 576.7 639.4 L421.7 639.4 Q412.7 639.4 412.7 630.4 Z" fill="#f2b57b" stroke="#111" stroke-width="1.3"/>
<rect x="412.7" y="558.6999999999999" width="173" height="1.4" fill="#111"/>
<text transform="translate(499.2 555.4) scale(1.13 1)" x="0" y="0" font-size="10.6" fill="#111" font-weight="normal" font-style="normal" text-anchor="middle" letter-spacing="0.3" >Tag</text>
<g><ellipse cx="425.7" cy="565.1999999999999" rx="3.3" ry="3.6" fill="#f0cc20" stroke="#9a8010" stroke-width="0.8"/><ellipse cx="425.7" cy="564.3" rx="1.3" ry="0.9" fill="#fffbe0"/><path d="M424.5 568.4 L426.9 568.4 L426.9 575.4 L425.7 576.9 L424.5 575.4 Z" fill="#ecc81c" stroke="#9a8010" stroke-width="0.6"/></g>
<text transform="translate(436.7 572.4) scale(1.15 1)" x="0" y="0" font-size="10.6" fill="#111" font-weight="bold" font-style="normal" text-anchor="start" letter-spacing="0" >ID</text>
<text transform="translate(496.1 572.4) scale(1.15 1)" x="0" y="0" font-size="10.6" fill="#111" font-weight="bold" font-style="normal" text-anchor="start" letter-spacing="0" >integer(10)</text>
<rect x="413.4" y="578" width="171.6" height="1" fill="#fdf0a6"/>
<g><rect x="420.2" y="580.0" width="10.8" height="14.6" fill="#fff" stroke="#0f3f80" stroke-width="1.2"/><rect x="420.79999999999995" y="580.6" width="9.6" height="3.8" fill="url(#gColTop)"/><rect x="420.79999999999995" y="584.4" width="9.6" height="0.6" fill="#2a6ac8"/><ellipse cx="425.59999999999997" cy="586.0" rx="1.7" ry="0.55" fill="#1d5fb0"/><ellipse cx="425.59999999999997" cy="588.0" rx="1.7" ry="0.55" fill="#1d5fb0"/><ellipse cx="425.59999999999997" cy="590.0" rx="1.7" ry="0.55" fill="#1d5fb0"/><ellipse cx="425.59999999999997" cy="592.1999999999999" rx="1.9" ry="0.9" fill="#1d5fb0"/></g>
<text transform="translate(436.7 590.4) scale(1.1 1)" x="0" y="0" font-size="10.6" fill="#111" font-weight="normal" font-style="normal" text-anchor="start" letter-spacing="0" >Name</text>
<text transform="translate(496.1 590.4) scale(1.1 1)" x="0" y="0" font-size="10.6" fill="#111" font-weight="normal" font-style="normal" text-anchor="start" letter-spacing="0" >varchar(255)</text>
<rect x="413.4" y="596" width="171.6" height="1" fill="#fdf0a6"/>
<g><rect x="420.2" y="598.0" width="10.8" height="14.6" fill="#fff" stroke="#0f3f80" stroke-width="1.2"/><rect x="420.79999999999995" y="598.6" width="9.6" height="3.8" fill="url(#gColTop)"/><rect x="420.79999999999995" y="602.4" width="9.6" height="0.6" fill="#2a6ac8"/><ellipse cx="425.59999999999997" cy="604.0" rx="1.7" ry="0.55" fill="#1d5fb0"/><ellipse cx="425.59999999999997" cy="606.0" rx="1.7" ry="0.55" fill="#1d5fb0"/><ellipse cx="425.59999999999997" cy="608.0" rx="1.7" ry="0.55" fill="#1d5fb0"/><ellipse cx="425.59999999999997" cy="610.1999999999999" rx="1.9" ry="0.9" fill="#1d5fb0"/></g>
<text transform="translate(436.7 608.4) scale(1.1 1)" x="0" y="0" font-size="10.6" fill="#111" font-weight="normal" font-style="normal" text-anchor="start" letter-spacing="0" >Remarks</text>
<text transform="translate(496.1 608.4) scale(1.1 1)" x="0" y="0" font-size="10.6" fill="#111" font-weight="normal" font-style="normal" text-anchor="start" letter-spacing="0" >varchar(255)</text>
<rect x="413.4" y="614" width="171.6" height="1" fill="#fdf0a6"/>
<g><rect x="420.2" y="616.0" width="10.8" height="14.6" fill="#fff" stroke="#0f3f80" stroke-width="1.2"/><rect x="420.79999999999995" y="616.6" width="9.6" height="3.8" fill="url(#gColTop)"/><rect x="420.79999999999995" y="620.4" width="9.6" height="0.6" fill="#2a6ac8"/><ellipse cx="425.59999999999997" cy="622.0" rx="1.7" ry="0.55" fill="#1d5fb0"/><ellipse cx="425.59999999999997" cy="624.0" rx="1.7" ry="0.55" fill="#1d5fb0"/><ellipse cx="425.59999999999997" cy="626.0" rx="1.7" ry="0.55" fill="#1d5fb0"/><ellipse cx="425.59999999999997" cy="628.1999999999999" rx="1.9" ry="0.9" fill="#1d5fb0"/></g>
<text transform="translate(436.7 626.4) scale(1.1 1)" x="0" y="0" font-size="10.6" fill="#111" font-weight="normal" font-style="normal" text-anchor="start" letter-spacing="0" >X</text>
<text transform="translate(496.1 626.4) scale(1.1 1)" x="0" y="0" font-size="10.6" fill="#111" font-weight="normal" font-style="normal" text-anchor="start" letter-spacing="0" >varchar(255)</text>
<rect x="581.5" y="581.5" width="6" height="11" rx="1.2" fill="#fff" stroke="#333" stroke-width="0.9"/>
<rect x="581.5" y="599.5" width="6" height="11" rx="1.2" fill="#fff" stroke="#333" stroke-width="0.9"/>
</g>
<rect x="190" y="618" width="400" height="8" rx="4" fill="#c1c1c1"/>
<rect x="38" y="614" width="5" height="15" fill="#fff"/>
<path d="M42 615 L42 627 L38 627" stroke="#666" stroke-width="1.2" fill="none"/>
<rect x="8.5" y="76.5" width="21" height="21" fill="#8a8a8a" stroke="#6aaaf0" stroke-width="1.5"/>
<path d="M13 80 L26 87.5 L19 88.5 L15 94 Z" fill="#2fd43a" stroke="#1a7a20" stroke-width="0.5"/>
<path d="M29 90 L29 97 L22 97 Z" fill="#222"/>
<path d="M19.4 102.5 L23.5 109.5 L15.3 109.5 Z" fill="#9a9a9a"/>
<path d="M15 622 L24 622 L19.5 629 Z" fill="#333"/>
<rect x="11.5" y="119.5" width="16" height="13" rx="3" fill="#f7b93c" stroke="#c4842a" stroke-width="1"/>
<rect x="14" y="121" width="11" height="1.3" fill="#5a3a10"/><rect x="12" y="123.2" width="15" height="0.8" fill="#e08a2a"/>
<rect x="14.5" y="143" width="13" height="12" rx="3" fill="#f7b93c" stroke="#c4842a" stroke-width="1"/>
<rect x="11.5" y="145.5" width="13.5" height="12" rx="3" fill="#f7b93c" stroke="#c4842a" stroke-width="1"/>
<rect x="13.5" y="147" width="9.5" height="1.3" fill="#5a3a10"/><rect x="12" y="149.2" width="12.5" height="0.8" fill="#e08a2a"/>
<path d="M11.5 169.5 L23 169.5 L27.5 172 L27.5 179 L23 181.5 L11.5 181.5 Z" fill="#a040c8" stroke="#6a2090" stroke-width="1"/>
<path d="M13 171.5 H22 M13 174.5 H24 M13 177 H22 M13 179.5 H21" stroke="#d9a8ef" stroke-width="0.8"/>
<g stroke="#111" stroke-width="1" fill="none">
<path d="M12 201.3 H14.5 M16.5 201.3 H19 M21 201.3 H23.5 M25.5 201.3 H28 M15.5 198.5 V204 M24.5 198.5 V204"/>
<path d="M11 226 H14 M16 226 H21 M15 223 V229"/><circle cx="23" cy="226" r="2.3"/><path d="M28.5 222.5 L25 226 L28.5 229.5"/>
<path d="M10.5 247.5 L14 251 L10.5 254.5 M10.5 251 H13"/><circle cx="16" cy="251" r="2.3"/><path d="M18.3 251 H20.7"/><circle cx="23" cy="251" r="2.3"/><path d="M28.5 247.5 L25 251 L28.5 254.5"/>
</g>
<rect x="11.5" y="269.5" width="16.5" height="12.5" fill="#b8f07a" stroke="#3a9a2a" stroke-width="1"/>
<rect x="12" y="270" width="15.5" height="2.5" fill="#6ad04a"/>
<path d="M13 274.5 H26 M13 277 H24 M13 279.5 H22" stroke="#5a8a3a" stroke-width="0.8"/>
<rect x="12.5" y="293.5" width="15.5" height="14" fill="#e6e48a" stroke="#9a9a4a" stroke-width="1"/>
<path d="M13 297 H27.5 M13 300 H27.5 M13 303 H27.5 M17 297 V307 M20.5 297 V307 M24 297 V307" stroke="#9a9a4a" stroke-width="0.7"/>
<path d="M11 319 H28 V332 H11 Q15 325.5 11 319 Z" fill="#6ad8d8" stroke="#2a6ab0" stroke-width="1"/>
<path d="M17 322 H26 M17 325 H26 M17 328 H26" stroke="#2a7a8a" stroke-width="0.8"/>
<rect x="11.5" y="344" width="16" height="12.5" fill="#4a90e0" stroke="#1a5ab0" stroke-width="1"/>
<path d="M14 347 H25 M14 349.5 H25 M14 352 H25 M14 354.3 H23" stroke="#1a3a70" stroke-width="0.8"/>
<path d="M12 376.2 H28" stroke="#333" stroke-width="1" stroke-dasharray="2 1.5"/>
<rect x="8" y="391.5" width="22" height="1.2" fill="#b0b0b0"/>
<path d="M11.5 400.5 H17 L18 403 H28 V415.5 H11.5 Z" fill="#5a9ee0" stroke="#2a5aa0" stroke-width="1"/>
<rect x="15" y="406" width="9" height="1.2" fill="#1a2a50"/>
<rect x="11.5" y="426.5" width="16" height="12" fill="#e8f0fa" stroke="#2a7ae0" stroke-width="1"/>
<rect x="12" y="427" width="15" height="2.5" fill="#3a8ae8"/><rect x="15" y="432" width="8" height="4" fill="#b8c8d8" stroke="#7a8aa0" stroke-width="0.5"/>
<rect x="11" y="457.2" width="17" height="1.5" fill="#8a8a8a"/>
<rect x="12.5" y="478.5" width="15" height="12" fill="#c8e6f8" stroke="#1a7aa8" stroke-width="1.3"/>
<rect x="12.5" y="500.5" width="15" height="15" fill="#dde8f0" stroke="#9ab0c8" stroke-width="0.8"/>
<path d="M14 513 Q19 504 26 509 V514 H14 Z" fill="#3aa03a"/><circle cx="20" cy="506" r="2.2" fill="#f0e020"/>
<path d="M11.5 530 H16 L18 527.5 H24 L26 530 H28 V538 H11.5 Z" fill="#4a6a90" stroke="#2a3a50" stroke-width="0.8"/>
<circle cx="21" cy="533.5" r="3.2" fill="#666" stroke="#222" stroke-width="0.8"/>
<path d="M11.5 553 Q11.5 551.5 13 551.5 H27.5 Q28.5 551.5 28.5 553 V560 Q28.5 561.5 27.5 561.5 H18 L14 564.5 L15.5 561.5 H13 Q11.5 561.5 11.5 560 Z" fill="#e4b8ec" stroke="#b070c0" stroke-width="0.8"/>
<path d="M14.5 554.5 H25 M14.5 557 H22" stroke="#555" stroke-width="0.8"/>
<rect x="11.5" y="577.5" width="17" height="10" rx="2.5" fill="#e0b4ea" stroke="#b070c0" stroke-width="0.8"/>
<ellipse cx="20" cy="607" rx="8.5" ry="5.5" fill="#e0b4ea" stroke="#b070c0" stroke-width="0.8"/>
<g filter="url(#shadow)"><rect x="21.6" y="305.3" width="417.6" height="245.1" rx="9" fill="#fff" stroke="#c4c4c4" stroke-width="0.8"/></g>
<rect x="31" y="316" width="199" height="223" fill="#363f4f"/>
<rect x="230" y="316" width="198" height="223" fill="#c4865b"/>
<rect x="42" y="335" width="178" height="183.5" rx="5" fill="#e6ca93"/>
<g transform="rotate(-2.7 100.5 379.3)">
<rect x="53" y="348.8" width="95" height="61" fill="#fff"/>
<rect x="59.5" y="367" width="30" height="6" fill="#7ccbee"/>
<rect x="65.5" y="369.4" width="18" height="1.3" fill="#fff"/>
<rect x="59.5" y="374.5" width="30" height="19" fill="#7ccbee"/>
<rect x="62.5" y="378.5" width="24" height="1.4" fill="#fff"/>
<rect x="62.5" y="383.2" width="24" height="1.4" fill="#fff"/>
<rect x="62.5" y="388" width="24" height="1.4" fill="#fff"/>
<rect x="111" y="367" width="30" height="6" fill="#7ccbee"/>
<rect x="117" y="369.4" width="18" height="1.3" fill="#fff"/>
<rect x="111" y="374.5" width="30" height="19" fill="#7ccbee"/>
<rect x="114" y="378.5" width="24" height="1.4" fill="#fff"/>
<rect x="114" y="383.2" width="24" height="1.4" fill="#fff"/>
<rect x="114" y="388" width="24" height="1.4" fill="#fff"/>
<rect x="89.5" y="379.7" width="21.5" height="1.8" fill="#222"/>
</g>
<g transform="rotate(2.9 159.3 458.8)">
<rect x="111.5" y="428.5" width="95.5" height="60.5" fill="#fff"/>
<rect x="117" y="445" width="30" height="27" rx="3.5" fill="#d99050"/>
<rect x="124" y="447.8" width="16" height="1.6" fill="#fff"/>
<rect x="117" y="451.5" width="30" height="1.4" fill="#fff"/>
<rect x="120.5" y="456" width="23" height="1.6" fill="#fff"/>
<rect x="120.5" y="460.5" width="23" height="1.6" fill="#fff"/>
<rect x="120.5" y="465" width="23" height="1.6" fill="#fff"/>
<rect x="169.5" y="445" width="30" height="27" rx="3.5" fill="#d99050"/>
<rect x="176.5" y="447.8" width="16" height="1.6" fill="#fff"/>
<rect x="169.5" y="451.5" width="30" height="1.4" fill="#fff"/>
<rect x="173.0" y="456" width="23" height="1.6" fill="#fff"/>
<rect x="173.0" y="460.5" width="23" height="1.6" fill="#fff"/>
<rect x="173.0" y="465" width="23" height="1.6" fill="#fff"/>
<path d="M148.5 458.5 h3 M152 458.5 h5 M164 458.5 h5" stroke="#333" stroke-width="1.5"/>
<circle cx="149.5" cy="458.5" r="1.3" fill="#333"/><circle cx="168.5" cy="458.5" r="1.3" fill="#333"/>
</g>
<path d="M129.8 403 Q146 398 151 410 L157.9 404.6 L159 424.3 L139.6 418.2 L146.5 413.5 Q142 405 129.8 403 Z" fill="#c95a66"/>
<path d="M116.8 436.5 Q100 436 96 427 L91 435.7 L88.7 416 L107.7 422 L100.5 425 Q105 434 116.8 436.5 Z" fill="#c95a66"/>
<path d="M215.5 382.8 Q224 374 233.5 377.5 L235.5 372 L245.3 385.5 L228.5 389.5 L232.5 384 Q224 379 215.5 382.8 Z" fill="#fff"/>
<path d="M215.5 473.3 Q224 464.5 233.5 468.0 L235.5 462.5 L245.3 476.0 L228.5 480.0 L232.5 474.5 Q224 469.5 215.5 473.3 Z" fill="#fff"/>
<rect x="240" y="335" width="178" height="86" rx="5" fill="#c6cbbc"/>
<rect x="249" y="350" width="50" height="45" fill="#fff"/>
<ellipse cx="274.0" cy="395" rx="25.0" ry="5" fill="#fff"/>
<ellipse cx="274.0" cy="349.5" rx="25.0" ry="5" fill="#fff"/>
<path d="M249 352.5 Q274.0 361.5 299 352.5" fill="none" stroke="#c6cbbc" stroke-width="2"/>
<path d="M249 360.5 Q274.0 368.5 299 360.5" fill="none" stroke="#c6cbbc" stroke-width="2.2"/>
<path d="M249 372.3 Q274.0 380.3 299 372.3" fill="none" stroke="#c6cbbc" stroke-width="2.2"/>
<path d="M249 384 Q274.0 392 299 384" fill="none" stroke="#c6cbbc" stroke-width="2.2"/>
<rect x="255.4" y="357.3" width="37.3" height="36.2" rx="4.5" fill="#c6cbbc"/>
<rect x="259" y="361" width="30" height="29.3" fill="#fff"/>
<rect x="304" y="350" width="50" height="45" fill="#fff"/>
<ellipse cx="329.0" cy="395" rx="25.0" ry="5" fill="#fff"/>
<ellipse cx="329.0" cy="349.5" rx="25.0" ry="5" fill="#fff"/>
<path d="M304 352.5 Q329.0 361.5 354 352.5" fill="none" stroke="#c6cbbc" stroke-width="2"/>
<path d="M304 360.5 Q329.0 368.5 354 360.5" fill="none" stroke="#c6cbbc" stroke-width="2.2"/>
<path d="M304 372.3 Q329.0 380.3 354 372.3" fill="none" stroke="#c6cbbc" stroke-width="2.2"/>
<path d="M304 384 Q329.0 392 354 384" fill="none" stroke="#c6cbbc" stroke-width="2.2"/>
<rect x="310.4" y="357.3" width="37.3" height="36.2" rx="4.5" fill="#c6cbbc"/>
<rect x="314" y="361" width="30" height="29.3" fill="#fff"/>
<rect x="360" y="350" width="50" height="45" fill="#fff"/>
<ellipse cx="385.0" cy="395" rx="25.0" ry="5" fill="#fff"/>
<ellipse cx="385.0" cy="349.5" rx="25.0" ry="5" fill="#fff"/>
<path d="M360 352.5 Q385.0 361.5 410 352.5" fill="none" stroke="#c6cbbc" stroke-width="2"/>
<path d="M360 360.5 Q385.0 368.5 410 360.5" fill="none" stroke="#c6cbbc" stroke-width="2.2"/>
<path d="M360 372.3 Q385.0 380.3 410 372.3" fill="none" stroke="#c6cbbc" stroke-width="2.2"/>
<path d="M360 384 Q385.0 392 410 384" fill="none" stroke="#c6cbbc" stroke-width="2.2"/>
<rect x="366.4" y="357.3" width="37.3" height="36.2" rx="4.5" fill="#c6cbbc"/>
<rect x="370" y="361" width="30" height="29.3" fill="#fff"/>
<g fill="none" stroke="#1f6a82" stroke-width="1" stroke-linejoin="round">
<path d="M260.5 363 C266 361 272 366 276 375 C278 380 281 382 285 383 L283.5 386 L287.5 389 L281 385.5 C277 384 272 381 268.5 378.5 L269.5 383.5 L266 379.5 L264.5 381.5 C264 377 262.5 371 260.5 363 Z"/>
</g>
<circle cx="266" cy="368" r="0.6" fill="#1f6a82"/>
<path d="M320.6 364.4 Q331 366 342.6 372 Q328 372.5 319.6 379.2 Q323 371 320.6 364.4 Z" fill="#fbe4e4" stroke="#d83a3a" stroke-width="1"/>
<path d="M323 367 L334 372 M322 374 L333 368 M327 365.5 L326 375 M330 367 L338 372" stroke="#d83a3a" stroke-width="0.6"/>
<path d="M318 389 Q316 382 322 380 Q330 378 333 385 Q333 391 325 391 Z" fill="#eef0f5" stroke="#9aa6bc" stroke-width="0.6"/>
<path d="M320 384 L330 388 M324 380 L323 391 M318 388 L331 382" stroke="#aab4c8" stroke-width="0.4"/>
<text x="384" y="378" font-size="6.3" fill="#d8303a" font-weight="normal" font-style="normal" text-anchor="middle" letter-spacing="0.1" stroke="#d8303a" stroke-width="0.15">ORACLE</text>
<text x="329" y="413" font-size="9.2" fill="#111" font-weight="normal" font-style="normal" text-anchor="middle" letter-spacing="0.45" stroke="#111" stroke-width="0.45">Vendor specific DBMS</text>
<rect x="240" y="432" width="178" height="87" rx="5" fill="#76c0aa"/>
<path d="M273.9 442.9 H311.5 L320.0 451.3 V498 H273.9 Z" fill="#fff"/>
<path d="M311.5 442.9 L320.0 451.3 H311.5 Z" fill="#76c0aa"/>
<path d="M312.7 444.5 L318.4 450.2 H312.7 Z" fill="#fff"/>
<path d="M337.9 442.9 H375.5 L384.0 451.3 V498 H337.9 Z" fill="#fff"/>
<path d="M375.5 442.9 L384.0 451.3 H375.5 Z" fill="#76c0aa"/>
<path d="M376.7 444.5 L382.4 450.2 H376.7 Z" fill="#fff"/>
<path d="M299.5 448 C293 455 300 458 296.5 465 M302.5 455 C298 458 301 461 298.5 464" fill="none" stroke="#e0262b" stroke-width="1.5"/>
<g fill="none" stroke="#2a7ac8" stroke-width="1.2">
<path d="M289 466.5 Q297 468.5 305 466.5 Q309 465.5 307.5 469 Q306 471 303.5 471.5"/>
<path d="M290.5 470.5 Q297 472.5 303 470.5"/>
<path d="M290.5 474 Q297 476 303 474"/>
<path d="M287 476.5 Q297 480 307 476.5"/>
</g>
<text x="297" y="490.3" font-size="12" fill="#e0262b" font-weight="normal" font-style="normal" text-anchor="middle" letter-spacing="-0.5" >Java</text>
<path d="M352 455.2 L362.8 455.2 L370 465.9 L358.2 465.9 Z" fill="#bcb07a"/>
<path d="M344.9 465.7 L352 455.2 L358.2 465.9 L351.5 476.7 Z" fill="#5a6670"/>
<path d="M370 465.9 L377.2 476.8 L370 487.7 L364.4 476.8 Z" fill="#5a6670"/>
<path d="M351.5 476.7 L364.4 476.8 L370 487.7 L358 487.7 Z" fill="#bcb07a"/>
<text x="130.5" y="510" font-size="9.2" fill="#111" font-weight="normal" font-style="normal" text-anchor="middle" letter-spacing="0.45" stroke="#111" stroke-width="0.45">Class Diagram &lt;-&gt; ERD</text>
<text x="329.3" y="510" font-size="9.2" fill="#111" font-weight="normal" font-style="normal" text-anchor="middle" letter-spacing="0.45" stroke="#111" stroke-width="0.45">Java and Hibernate (ORM) tier</text>
<g>
<rect x="585" y="0" width="585" height="658" fill="#ececec"/>
<rect x="585" y="0" width="585" height="22" fill="url(#gTitle)"/>
<rect x="585" y="22" width="585" height="1" fill="#b5b5b5"/>
<circle cx="600" cy="12" r="6" fill="#fc5f57" stroke="#de4a43" stroke-width="0.6"/>
<circle cx="620" cy="12" r="6" fill="#fdbb2e" stroke="#dd9f21" stroke-width="0.6"/>
<circle cx="640" cy="12" r="6" fill="#29c940" stroke="#1daa2f" stroke-width="0.6"/>
<circle cx="600" cy="12" r="2" fill="#4d0000"/>
<path d="M1024.5 5 H1033.5 L1036.5 8 V19 H1024.5 Z" fill="#eeeae6" stroke="#c9c2ba" stroke-width="0.6"/>
<path d="M1030.5 15.5 L1026.8 10.5 Q1026.0 6.3 1030.5 6 Q1035.0 6.3 1034.2 10.5 Z" fill="#e08a90"/>
<circle cx="1030.5" cy="9.5" r="1.1" fill="#fff"/>
<rect x="1027.5" y="16.5" width="6" height="1" fill="#e08a90" opacity="0.6"/>
<text x="1043.6" y="16.7" font-size="13" fill="#3a3a3a" font-weight="normal" font-style="normal" text-anchor="start" letter-spacing="0.35" >Ticket System * - Visual Paradigm</text>
<rect x="585" y="23" width="585" height="23" fill="#ebebeb"/>
<text x="605.7" y="39.7" font-size="13" fill="#1a1a1a" font-weight="normal" font-style="normal" text-anchor="start" letter-spacing="0.3" stroke="#1a1a1a" stroke-width="0.25">Dash</text>
<text x="667.2" y="39.7" font-size="13" fill="#1a1a1a" font-weight="normal" font-style="normal" text-anchor="start" letter-spacing="0.3" stroke="#1a1a1a" stroke-width="0.25">Project</text>
<text x="740" y="39.7" font-size="13" fill="#1a1a1a" font-weight="normal" font-style="normal" text-anchor="start" letter-spacing="0.3" stroke="#1a1a1a" stroke-width="0.25">ITSM</text>
<text x="800.2" y="39.7" font-size="13" fill="#1a1a1a" font-weight="normal" font-style="normal" text-anchor="start" letter-spacing="0.3" stroke="#1a1a1a" stroke-width="0.25">UeXceler</text>
<text x="884.1" y="39.7" font-size="13" fill="#1a1a1a" font-weight="normal" font-style="normal" text-anchor="start" letter-spacing="0.3" stroke="#1a1a1a" stroke-width="0.25">Diagram</text>
<text x="967" y="39.7" font-size="13" fill="#1a1a1a" font-weight="normal" font-style="normal" text-anchor="start" letter-spacing="0.3" stroke="#1a1a1a" stroke-width="0.25">View</text>
<text x="1026.4" y="39.7" font-size="13" fill="#1a1a1a" font-weight="normal" font-style="normal" text-anchor="start" letter-spacing="0.3" stroke="#1a1a1a" stroke-width="0.25">Team</text>
<text x="1090.1" y="39.7" font-size="13" fill="#1a1a1a" font-weight="normal" font-style="normal" text-anchor="start" letter-spacing="0.3" stroke="#1a1a1a" stroke-width="0.25">Tools</text>
<text x="1155" y="39.7" font-size="13" fill="#1a1a1a" font-weight="normal" font-style="normal" text-anchor="start" letter-spacing="0.3" stroke="#1a1a1a" stroke-width="0.25">Modeling</text>
<rect x="585" y="46" width="585" height="30" fill="#f0f0f0"/>
<path d="M593.5 49.5 L706.5 49.5 L718.5 60 L706.5 70.5 L593.5 70.5 Z" fill="#f4f4f4" stroke="#c9c9c9" stroke-width="1"/>
<text x="601.8" y="65.9" font-size="14.5" fill="#707070" font-weight="normal" font-style="normal" text-anchor="start" letter-spacing="0.2" >Class Diagram</text>
<rect x="585" y="76" width="37" height="555" fill="#eeeeee"/>
<rect x="622" y="76" width="548" height="538" fill="#ffffff"/>
<rect x="622" y="614" width="548" height="15" fill="#f6f6f6"/>
<rect x="622" y="614" width="548" height="1" fill="#e2e2e2"/>
<rect x="622" y="629" width="548" height="2" fill="#4c9ff2"/>
<rect x="585" y="631" width="585" height="26" fill="url(#gStatus)"/>
<rect x="585" y="656" width="585" height="1" fill="#e8e8e8"/>
<rect x="585" y="657" width="585" height="1" fill="#7a7a7a"/>
<rect x="585" y="0" width="1" height="658" fill="#b4b4b4"/>
<rect x="585" y="0" width="585" height="1" fill="#c4c4c4"/>
<rect x="585" y="1" width="585" height="1" fill="#f2f2f2"/>
<path d="M585 0 H591 Q586 1 585.5 6 V0 Z" fill="#c8c8c8"/>
<rect x="747" y="77" width="422" height="20" fill="#ebebeb"/>
<rect x="622.8" y="76.8" width="124.4" height="20.4" fill="#fff" stroke="#000" stroke-width="1.5"/>
<text x="627" y="92" font-size="13" fill="#111" font-weight="normal" font-style="normal" text-anchor="start" letter-spacing="0.62" >&lt;default package&gt;</text>
<circle cx="754" cy="90" r="2.5" fill="none" stroke="#555" stroke-width="0.8"/><path d="M756 92 L758.5 94.5" stroke="#555" stroke-width="0.9"/>
<rect x="622" y="97" width="547" height="1.2" fill="#111"/>
<rect x="622" y="98.2" width="547" height="1" fill="#68a8ec"/>
<rect x="622" y="98" width="1" height="516" fill="#68a8ec"/>
<rect x="1169" y="0" width="1" height="658" fill="#9a9a9a"/>
<g clip-path="url(#clipR)">
<g stroke="#222" stroke-width="1.2" fill="none">
<path d="M822 132.3 L855 99.5 M822 132.3 L902 99.5"/>
<path d="M822 175.6 L944 175.6"/>
<path d="M822 273.3 L944 273.3"/>
<path d="M622 215.7 L668.5 215.7"/>
<path d="M737.4 294.5 L737.4 365.7"/>
<path d="M622 378.2 L668.3 378.2"/>
<path d="M822 541 L848.3 541 L911.5 403.5 L937.6 403.5"/>
<path d="M1087.5 364.3 L1169 364.3 M1087.5 405.1 L1169 405.1 M1087.5 448.2 L1169 448.2"/>
</g>
<rect x="668.5" y="132.5" width="153.0" height="162.0" fill="#7acef4" stroke="#000" stroke-width="1.2"/>
<rect x="668.5" y="160" width="153.0" height="1.2" fill="#000"/>
<text transform="translate(745.0 143) scale(1.1 1)" x="0" y="0" font-size="10" fill="#111" font-weight="normal" font-style="normal" text-anchor="middle" letter-spacing="0.5" >&lt;&lt;ORM Persistable&gt;&gt;</text>
<text transform="translate(745.0 156.8) scale(1.1 1)" x="0" y="0" font-size="10" fill="#111" font-weight="bold" font-style="normal" text-anchor="middle" letter-spacing="0.45" >Staff</text>
<text transform="translate(670.5 172.6) scale(1.1 1)" x="0" y="0" font-size="10" fill="#111" font-weight="normal" font-style="normal" text-anchor="start" letter-spacing="0.36" >–ID : int</text>
<text transform="translate(670.5 186.6) scale(1.1 1)" x="0" y="0" font-size="10" fill="#111" font-weight="normal" font-style="normal" text-anchor="start" letter-spacing="0.36" >–firstName : String</text>
<text transform="translate(670.5 200.6) scale(1.1 1)" x="0" y="0" font-size="10" fill="#111" font-weight="normal" font-style="normal" text-anchor="start" letter-spacing="0.36" >–address : String</text>
<text transform="translate(670.5 214.6) scale(1.1 1)" x="0" y="0" font-size="10" fill="#111" font-weight="normal" font-style="normal" text-anchor="start" letter-spacing="0.36" >–salary : Integer</text>
<text transform="translate(670.5 228.6) scale(1.1 1)" x="0" y="0" font-size="10" fill="#111" font-weight="normal" font-style="normal" text-anchor="start" letter-spacing="0.36" >–lastName : String</text>
<text transform="translate(670.5 242.6) scale(1.1 1)" x="0" y="0" font-size="10" fill="#111" font-weight="normal" font-style="normal" text-anchor="start" letter-spacing="0.36" >–email : String</text>
<text transform="translate(670.5 256.6) scale(1.1 1)" x="0" y="0" font-size="10" fill="#111" font-weight="normal" font-style="normal" text-anchor="start" letter-spacing="0.36" >–profileImage : String</text>
<text transform="translate(670.5 270.6) scale(1.1 1)" x="0" y="0" font-size="10" fill="#111" font-weight="normal" font-style="normal" text-anchor="start" letter-spacing="0.36" >–phoneNum : String</text>
<text transform="translate(670.5 284.6) scale(1.1 1)" x="0" y="0" font-size="10" fill="#111" font-weight="normal" font-style="normal" text-anchor="start" letter-spacing="0.36" >–timeZone : String</text>
<rect x="944.5" y="118.5" width="137.0" height="92.0" fill="#7acef4" stroke="#000" stroke-width="1.2"/>
<rect x="944.5" y="146" width="137.0" height="1.2" fill="#000"/>
<text transform="translate(1013.0 129) scale(1.1 1)" x="0" y="0" font-size="10" fill="#111" font-weight="normal" font-style="normal" text-anchor="middle" letter-spacing="0.5" >&lt;&lt;ORM Persistable&gt;&gt;</text>
<text transform="translate(1013.0 142.8) scale(1.1 1)" x="0" y="0" font-size="10" fill="#111" font-weight="bold" font-style="normal" text-anchor="middle" letter-spacing="0.45" >Predefined</text>
<text transform="translate(946.5 158.6) scale(1.1 1)" x="0" y="0" font-size="10" fill="#111" font-weight="normal" font-style="normal" text-anchor="start" letter-spacing="0.36" >–ID : int</text>
<text transform="translate(946.5 172.6) scale(1.1 1)" x="0" y="0" font-size="10" fill="#111" font-weight="normal" font-style="normal" text-anchor="start" letter-spacing="0.36" >–subject : String</text>
<text transform="translate(946.5 186.6) scale(1.1 1)" x="0" y="0" font-size="10" fill="#111" font-weight="normal" font-style="normal" text-anchor="start" letter-spacing="0.36" >–content : String</text>
<text transform="translate(946.5 200.6) scale(1.1 1)" x="0" y="0" font-size="10" fill="#111" font-weight="normal" font-style="normal" text-anchor="start" letter-spacing="0.36" >–importance : String</text>
<rect x="944.5" y="234.5" width="137.0" height="78.0" fill="#7acef4" stroke="#000" stroke-width="1.2"/>
<rect x="944.5" y="262" width="137.0" height="1.2" fill="#000"/>
<text transform="translate(1013.0 245) scale(1.1 1)" x="0" y="0" font-size="10" fill="#111" font-weight="normal" font-style="normal" text-anchor="middle" letter-spacing="0.5" >&lt;&lt;ORM Persistable&gt;&gt;</text>
<text transform="translate(1013.0 258.8) scale(1.1 1)" x="0" y="0" font-size="10" fill="#111" font-weight="bold" font-style="normal" text-anchor="middle" letter-spacing="0.45" >Report</text>
<text transform="translate(946.5 274.6) scale(1.1 1)" x="0" y="0" font-size="10" fill="#111" font-weight="normal" font-style="normal" text-anchor="start" letter-spacing="0.36" >–ID : int</text>
<text transform="translate(946.5 288.6) scale(1.1 1)" x="0" y="0" font-size="10" fill="#111" font-weight="normal" font-style="normal" text-anchor="start" letter-spacing="0.36" >–subject : String</text>
<text transform="translate(946.5 302.6) scale(1.1 1)" x="0" y="0" font-size="10" fill="#111" font-weight="normal" font-style="normal" text-anchor="start" letter-spacing="0.36" >–content : String</text>
<rect x="668.5" y="365.5" width="153.0" height="64.0" fill="#7acef4" stroke="#000" stroke-width="1.2"/>
<rect x="668.5" y="393" width="153.0" height="1.2" fill="#000"/>
<text transform="translate(745.0 376) scale(1.1 1)" x="0" y="0" font-size="10" fill="#111" font-weight="normal" font-style="normal" text-anchor="middle" letter-spacing="0.5" >&lt;&lt;ORM Persistable&gt;&gt;</text>
<text transform="translate(745.0 389.8) scale(1.1 1)" x="0" y="0" font-size="10" fill="#111" font-weight="bold" font-style="normal" text-anchor="middle" letter-spacing="0.45" >Knowledge</text>
<text transform="translate(670.5 405.6) scale(1.1 1)" x="0" y="0" font-size="10" fill="#111" font-weight="normal" font-style="normal" text-anchor="start" letter-spacing="0.36" >–ID : int</text>
<text transform="translate(670.5 419.6) scale(1.1 1)" x="0" y="0" font-size="10" fill="#111" font-weight="normal" font-style="normal" text-anchor="start" letter-spacing="0.36" >–content : String</text>
<rect x="937.5" y="352.5" width="150.0" height="106.0" fill="#7acef4" stroke="#000" stroke-width="1.2"/>
<rect x="937.5" y="380" width="150.0" height="1.2" fill="#000"/>
<text transform="translate(1012.5 363) scale(1.1 1)" x="0" y="0" font-size="10" fill="#111" font-weight="normal" font-style="normal" text-anchor="middle" letter-spacing="0.5" >&lt;&lt;ORM Persistable&gt;&gt;</text>
<text transform="translate(1012.5 376.8) scale(1.1 1)" x="0" y="0" font-size="10" fill="#111" font-weight="bold" font-style="normal" text-anchor="middle" letter-spacing="0.45" >Ticket_Container</text>
<text transform="translate(939.5 392.6) scale(1.1 1)" x="0" y="0" font-size="10" fill="#111" font-weight="normal" font-style="normal" text-anchor="start" letter-spacing="0.36" >–ID : int</text>
<text transform="translate(939.5 406.6) scale(1.1 1)" x="0" y="0" font-size="10" fill="#111" font-weight="normal" font-style="normal" text-anchor="start" letter-spacing="0.36" >–subject : String</text>
<text transform="translate(939.5 420.6) scale(1.1 1)" x="0" y="0" font-size="10" fill="#111" font-weight="normal" font-style="normal" text-anchor="start" letter-spacing="0.36" >–CC : String</text>
<text transform="translate(939.5 434.6) scale(1.1 1)" x="0" y="0" font-size="10" fill="#111" font-weight="normal" font-style="normal" text-anchor="start" letter-spacing="0.36" >–BCC : String</text>
<text transform="translate(939.5 448.6) scale(1.1 1)" x="0" y="0" font-size="10" fill="#111" font-weight="normal" font-style="normal" text-anchor="start" letter-spacing="0.36" >–recipientFullName : String</text>
<rect x="668.5" y="502.5" width="153.0" height="78.0" fill="#7acef4" stroke="#000" stroke-width="1.2"/>
<rect x="668.5" y="530" width="153.0" height="1.2" fill="#000"/>
<text transform="translate(745.0 513) scale(1.1 1)" x="0" y="0" font-size="10" fill="#111" font-weight="normal" font-style="normal" text-anchor="middle" letter-spacing="0.5" >&lt;&lt;ORM Persistable&gt;&gt;</text>
<text transform="translate(745.0 526.8) scale(1.1 1)" x="0" y="0" font-size="10" fill="#111" font-weight="bold" font-style="normal" text-anchor="middle" letter-spacing="0.45" >Department</text>
<text transform="translate(670.5 542.6) scale(1.1 1)" x="0" y="0" font-size="10" fill="#111" font-weight="normal" font-style="normal" text-anchor="start" letter-spacing="0.36" >–ID : int</text>
<text transform="translate(670.5 556.6) scale(1.1 1)" x="0" y="0" font-size="10" fill="#111" font-weight="normal" font-style="normal" text-anchor="start" letter-spacing="0.36" >–name : String</text>
<text transform="translate(670.5 570.6) scale(1.1 1)" x="0" y="0" font-size="10" fill="#111" font-weight="normal" font-style="normal" text-anchor="start" letter-spacing="0.36" >–remarks : String</text>
<text transform="translate(821.2 110.7) scale(1.1 1)" x="0" y="0" font-size="10" fill="#111" font-weight="normal" font-style="normal" text-anchor="start" letter-spacing="0.4" >0..*</text>
<text transform="translate(850.6 110.7) scale(1.1 1)" x="0" y="0" font-size="10" fill="#111" font-weight="normal" font-style="normal" text-anchor="start" letter-spacing="0.4" >staff</text>
<text transform="translate(804.9 122.9) scale(1.1 1)" x="0" y="0" font-size="10" fill="#111" font-weight="normal" font-style="normal" text-anchor="start" letter-spacing="0.4" >1</text>
<text transform="translate(836.3 141.7) scale(1.1 1)" x="0" y="0" font-size="10" fill="#111" font-weight="normal" font-style="normal" text-anchor="start" letter-spacing="0.4" >staff</text>
<text transform="translate(849 170.9) scale(1.1 1)" x="0" y="0" font-size="10" fill="#111" font-weight="normal" font-style="normal" text-anchor="start" letter-spacing="0.4" >1</text>
<text transform="translate(871.3 170.9) scale(1.1 1)" x="0" y="0" font-size="10" fill="#111" font-weight="normal" font-style="normal" text-anchor="start" letter-spacing="0.4" >predefined</text>
<text transform="translate(848.7 186.3) scale(1.1 1)" x="0" y="0" font-size="10" fill="#111" font-weight="normal" font-style="normal" text-anchor="start" letter-spacing="0.4" >staff</text>
<text transform="translate(909.2 186.3) scale(1.1 1)" x="0" y="0" font-size="10" fill="#111" font-weight="normal" font-style="normal" text-anchor="start" letter-spacing="0.4" >0..*</text>
<text transform="translate(836.5 265.7) scale(1.1 1)" x="0" y="0" font-size="10" fill="#111" font-weight="normal" font-style="normal" text-anchor="start" letter-spacing="0.4" >1</text>
<text transform="translate(900.7 268.8) scale(1.1 1)" x="0" y="0" font-size="10" fill="#111" font-weight="normal" font-style="normal" text-anchor="start" letter-spacing="0.4" >report</text>
<text transform="translate(836.5 283.6) scale(1.1 1)" x="0" y="0" font-size="10" fill="#111" font-weight="normal" font-style="normal" text-anchor="start" letter-spacing="0.4" >staff</text>
<text transform="translate(913 283.6) scale(1.1 1)" x="0" y="0" font-size="10" fill="#111" font-weight="normal" font-style="normal" text-anchor="start" letter-spacing="0.4" >0..*</text>
<text transform="translate(636.6 210) scale(1.1 1)" x="0" y="0" font-size="10" fill="#111" font-weight="normal" font-style="normal" text-anchor="start" letter-spacing="0.4" >staff</text>
<text transform="translate(652 235.5) scale(1.1 1)" x="0" y="0" font-size="10" fill="#111" font-weight="normal" font-style="normal" text-anchor="start" letter-spacing="0.4" >1</text>
<text transform="translate(701.6 319.6) scale(1.1 1)" x="0" y="0" font-size="10" fill="#111" font-weight="normal" font-style="normal" text-anchor="start" letter-spacing="0.4" >staff</text>
<text transform="translate(744.3 316.2) scale(1.1 1)" x="0" y="0" font-size="10" fill="#111" font-weight="normal" font-style="normal" text-anchor="start" letter-spacing="0.4" >1</text>
<text transform="translate(708.5 356.6) scale(1.1 1)" x="0" y="0" font-size="10" fill="#111" font-weight="normal" font-style="normal" text-anchor="start" letter-spacing="0.4" >0..*</text>
<text transform="translate(744.3 356.6) scale(1.1 1)" x="0" y="0" font-size="10" fill="#111" font-weight="normal" font-style="normal" text-anchor="start" letter-spacing="0.4" >knowledge</text>
<text transform="translate(642.8 390.8) scale(1.1 1)" x="0" y="0" font-size="10" fill="#111" font-weight="normal" font-style="normal" text-anchor="start" letter-spacing="0.4" >0..*</text>
<text transform="translate(834.7 536.7) scale(1.1 1)" x="0" y="0" font-size="10" fill="#111" font-weight="normal" font-style="normal" text-anchor="start" letter-spacing="0.4" >1</text>
<text transform="translate(833.5 552.7) scale(1.1 1)" x="0" y="0" font-size="10" fill="#111" font-weight="normal" font-style="normal" text-anchor="start" letter-spacing="0.4" >department</text>
<text transform="translate(860.3 399.4) scale(1.1 1)" x="0" y="0" font-size="10" fill="#111" font-weight="normal" font-style="normal" text-anchor="start" letter-spacing="0.4" >ticket_Parent</text>
<text transform="translate(908.8 416.9) scale(1.1 1)" x="0" y="0" font-size="10" fill="#111" font-weight="normal" font-style="normal" text-anchor="start" letter-spacing="0.4" >0..*</text>
<text transform="translate(1103.3 360.7) scale(1.1 1)" x="0" y="0" font-size="10" fill="#111" font-weight="normal" font-style="normal" text-anchor="start" letter-spacing="0.4" >1</text>
<text transform="translate(1093.4 376.5) scale(1.1 1)" x="0" y="0" font-size="10" fill="#111" font-weight="normal" font-style="normal" text-anchor="start" letter-spacing="0.4" >ticket</text>
<text transform="translate(1103.3 399.2) scale(1.1 1)" x="0" y="0" font-size="10" fill="#111" font-weight="normal" font-style="normal" text-anchor="start" letter-spacing="0.4" >1</text>
<text transform="translate(1093.4 417.4) scale(1.1 1)" x="0" y="0" font-size="10" fill="#111" font-weight="normal" font-style="normal" text-anchor="start" letter-spacing="0.4" >ticket_Parent</text>
<text transform="translate(1101.3 442.6) scale(1.1 1)" x="0" y="0" font-size="10" fill="#111" font-weight="normal" font-style="normal" text-anchor="start" letter-spacing="0.4" >0..*</text>
<text transform="translate(1099.3 460) scale(1.1 1)" x="0" y="0" font-size="10" fill="#111" font-weight="normal" font-style="normal" text-anchor="start" letter-spacing="0.4" >ticket</text>
<text transform="translate(658.3 373.2) scale(1.1 1)" x="0" y="0" font-size="10" fill="#111" font-weight="normal" font-style="normal" text-anchor="end" letter-spacing="0.4" >knowledge</text>
</g>
<rect x="786" y="618" width="400" height="8" rx="4" fill="#c1c1c1"/>
<rect x="623" y="614" width="5" height="15" fill="#fff"/>
<path d="M627 615 L627 627 L623 627" stroke="#666" stroke-width="1.2" fill="none"/>
<rect x="593.5" y="76.5" width="21" height="21" fill="#8a8a8a" stroke="#6aaaf0" stroke-width="1.5"/>
<path d="M598 80 L611 87.5 L604 88.5 L600 94 Z" fill="#2fd43a" stroke="#1a7a20" stroke-width="0.5"/>
<path d="M614 90 L614 97 L607 97 Z" fill="#222"/>
<path d="M604.4 102.5 L608.5 109.5 L600.3 109.5 Z" fill="#9a9a9a"/>
<path d="M600 622 L609 622 L604.5 629 Z" fill="#333"/>
<rect x="598" y="118" width="13" height="16" fill="url(#gBlueV)"/>
<rect x="598" y="127" width="13" height="0.7" fill="#2a60a8"/>
<path d="M601 121.6 H608.6 M601 123.6 H608.6 M601 128.8 H608.6 M601 130.8 H608.6" stroke="#3a4a60" stroke-width="0.9"/>
<path d="M615 136 L615 129.5 L608.5 136 Z" fill="#1a1a1a"/>
<path d="M597.5 152 L604 147.5 L604 156.5 Z M604 152 H614" fill="none" stroke="#111" stroke-width="1.2"/>
<path d="M615 161 L615 154.5 L608.5 161 Z" fill="#1a1a1a"/>
<text x="605" y="178" font-size="7.5" fill="#111" font-weight="bold" font-style="normal" text-anchor="middle" letter-spacing="0" >«U»</text>
<path d="M597 180.5 H612 M609 178.5 L613 180.5 L609 182.5" fill="none" stroke="#111" stroke-width="0.9" stroke-dasharray="1.5 1"/>
<rect x="596" y="200.5" width="18" height="1.5" fill="#777"/>
<path d="M615 211 L615 204.5 L608.5 211 Z" fill="#1a1a1a"/>
<path d="M604.5 220.5 L612 226 L604.5 231.5 L597 226 Z" fill="#5aa0e8" stroke="#3a80c8" stroke-width="0.8"/>
<path d="M596.5 244 H613 M604.7 244 V251" fill="none" stroke="#111" stroke-width="1" />
<rect x="599.5" y="251.5" width="10.5" height="5" fill="#4a8ad8" stroke="#2a5aa0" stroke-width="0.6"/>
<path d="M597 276.5 H613 M608 273 L613 276.5 L608 280" fill="none" stroke="#111" stroke-width="0.9" stroke-dasharray="1.8 1.2"/>
<path d="M615 284 L615 277.5 L608.5 284 Z" fill="#1a1a1a"/>
<text x="605" y="302" font-size="7.5" fill="#111" font-weight="bold" font-style="normal" text-anchor="middle" letter-spacing="0" >«a»</text>
<path d="M597 304.5 H612 M608 302 L613 304.5 L608 307" fill="none" stroke="#111" stroke-width="0.9" stroke-dasharray="1.5 1"/>
<path d="M615 310 L615 303.5 L608.5 310 Z" fill="#1a1a1a"/>
<ellipse cx="605" cy="326" rx="8" ry="4.5" fill="#2a7ad8" stroke="#5aa0f0" stroke-width="1" stroke-dasharray="1 1"/>
<path d="M596.5 343.5 H602 L603 346 H613 V358.5 H596.5 Z" fill="#5a9ee0" stroke="#2a5aa0" stroke-width="1"/>
<path d="M600 350.5 H607 V353 M605 356 L607 353 L609.5 356 Z" fill="none" stroke="#1a2a50" stroke-width="0.8"/>
<rect x="597.5" y="368.3" width="15.5" height="14.2" rx="1.5" fill="url(#gGrayV)" stroke="#222" stroke-width="1"/>
<path d="M597.5 372.2 H613" stroke="#222" stroke-width="1"/>
<circle cx="599.5" cy="382.5" r="1" fill="#fff" stroke="#555" stroke-width="0.6"/><circle cx="611" cy="382.5" r="1" fill="#fff" stroke="#555" stroke-width="0.6"/>
<path d="M596.5 394.5 H608.5 L613 398.5 V406.8 H596.5 Z" fill="url(#gBlueV)" stroke="#1a60c0" stroke-width="1"/>
<path d="M608.5 394.5 V398.5 H613" fill="#bcd8f4" stroke="#1a60c0" stroke-width="0.6"/>
<path d="M598.5 397.8 H604 M598.5 399.8 H604 M598.5 401.8 H610.5 M598.5 403.8 H610.5" stroke="#2a4a70" stroke-width="0.7"/>
<path d="M597 426 H613" stroke="#333" stroke-width="0.9" stroke-dasharray="1.5 1"/>
<text x="605" y="450" font-size="8.5" fill="#111" font-weight="bold" font-style="normal" text-anchor="middle" letter-spacing="0" >{ }</text>
<path d="M597 454.5 H613" stroke="#111" stroke-width="0.9" stroke-dasharray="1.5 1"/>
<circle cx="600.5" cy="476" r="3" fill="none" stroke="#111" stroke-width="0.9"/><path d="M597.5 476 H613 M600.5 473 V479" stroke="#111" stroke-width="0.9"/>
<rect x="593" y="491" width="22" height="1.2" fill="#b8b8b8"/>
<path d="M596.5 500.5 H602 L603 503 H613 V516 H596.5 Z" fill="#5a9ee0" stroke="#2a5aa0" stroke-width="1"/>
<rect x="600" y="506" width="9" height="1.2" fill="#1a2a50"/>
<path d="M615 518 L615 511.5 L608.5 518 Z" fill="#1a1a1a"/>
<rect x="596.5" y="526.5" width="16.5" height="12.5" fill="url(#gLightBlue)" stroke="#1a8af0" stroke-width="1.1"/>
<path d="M597 527 H604 L603 529 H597 Z" fill="#5aaaf0"/>
<rect x="599" y="533.5" width="5" height="2.5" fill="#d8e4f0" stroke="#8a9ab8" stroke-width="0.5"/><rect x="605" y="530" width="5" height="2.5" fill="#d8e4f0" stroke="#8a9ab8" stroke-width="0.5"/>
<rect x="596" y="557" width="17" height="1.5" fill="#8a8a8a"/>
<rect x="597.5" y="578.5" width="15" height="10" fill="#c8e6f8" stroke="#1a7aa8" stroke-width="1.3"/>
<rect x="597.5" y="600.5" width="15" height="14" fill="#dde8f0" stroke="#9ab0c8" stroke-width="0.8"/>
<path d="M599 613 Q604 604 611 609 V614 H599 Z" fill="#3aa03a"/><circle cx="605" cy="606" r="2.2" fill="#f0e020"/>
</g>
</svg></body></html>
